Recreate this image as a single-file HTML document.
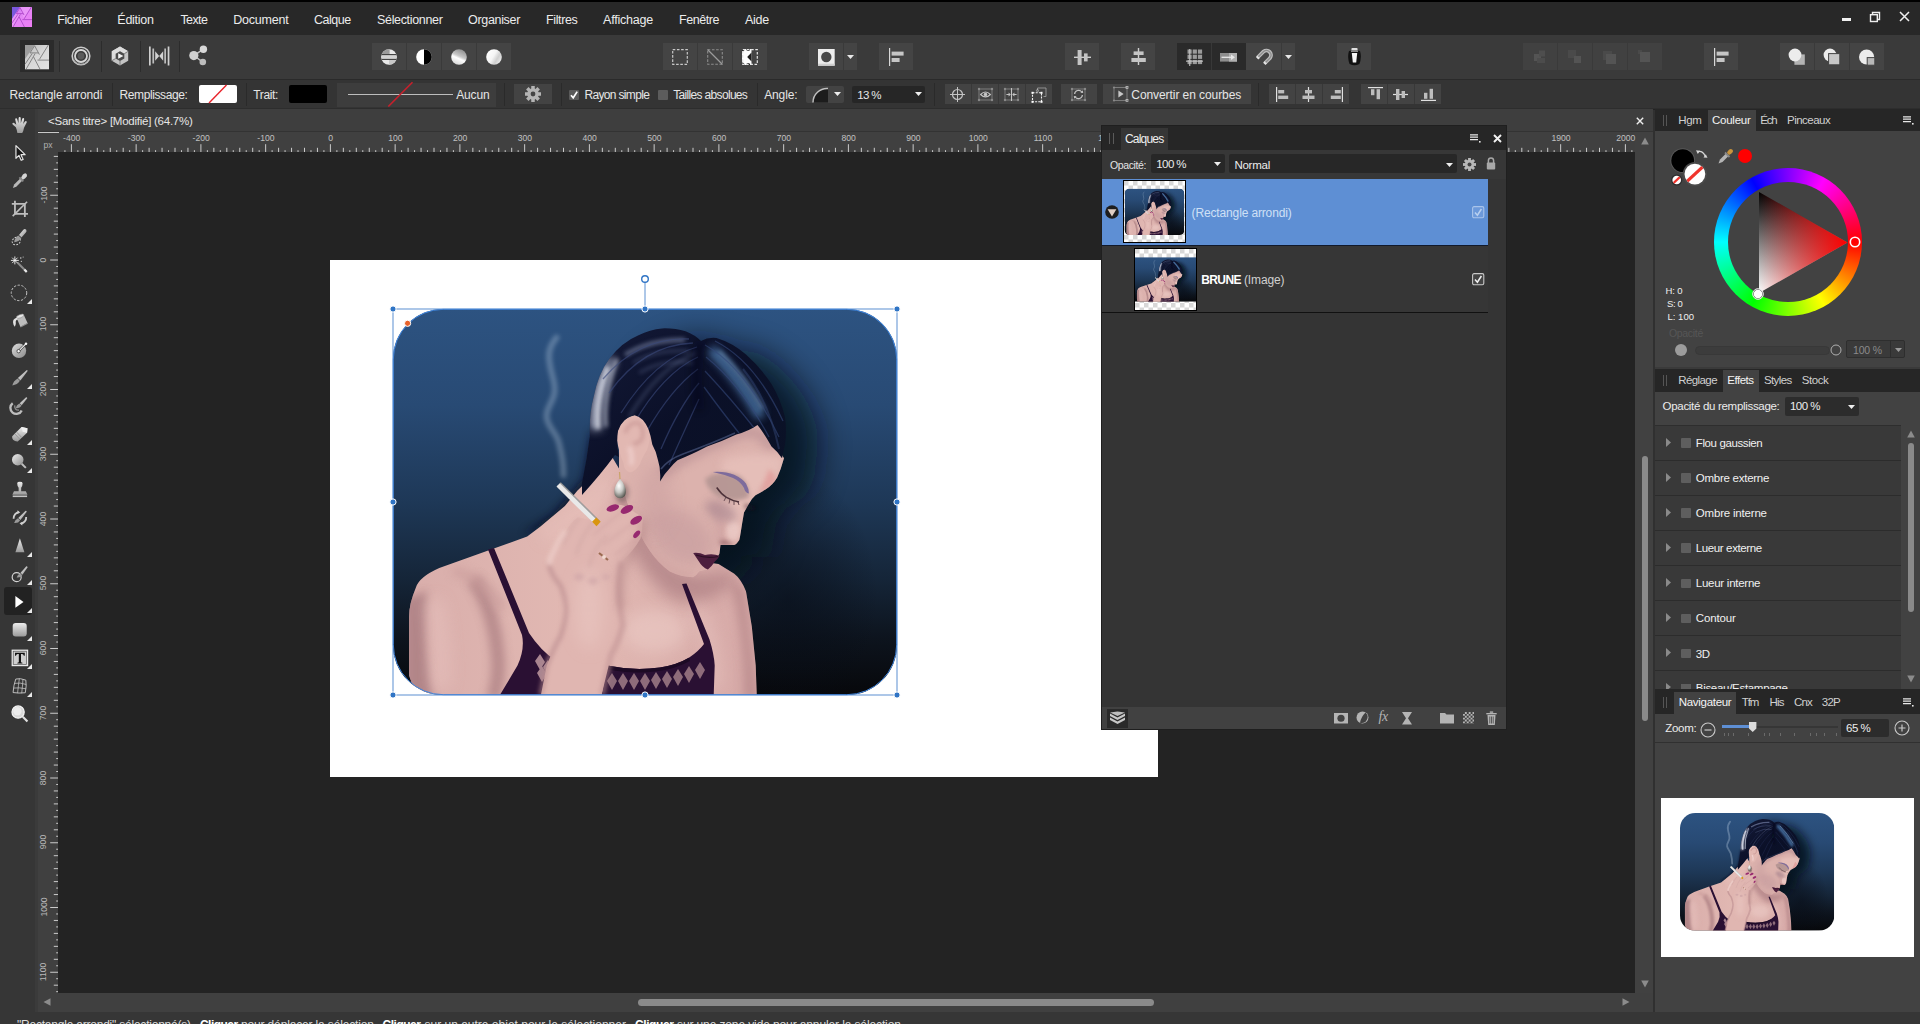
<!DOCTYPE html>
<html><head><meta charset="utf-8"><title>Affinity Photo</title>
<style>
html,body{margin:0;padding:0;background:#232323;}
body{width:1920px;height:1024px;overflow:hidden;position:relative;font-family:"Liberation Sans",sans-serif;}
.a{position:absolute;display:block;}
.t{position:absolute;white-space:pre;display:block;}
svg{overflow:visible}
</style></head><body>
<div class="a" style="left:0.00px;top:0.00px;width:1920.00px;height:2.00px;background:#000;"></div>
<div class="a" style="left:0.00px;top:2.00px;width:1920.00px;height:33.00px;background:#282828;"></div>
<div class="a" style="left:0.00px;top:35.00px;width:1920.00px;height:44.00px;background:#3a3a3a;"></div>
<div class="a" style="left:0.00px;top:79.00px;width:1920.00px;height:1.00px;background:#2a2a2a;"></div>
<div class="a" style="left:0.00px;top:80.00px;width:1920.00px;height:28.00px;background:#343434;"></div>
<div class="a" style="left:0.00px;top:108.00px;width:1920.00px;height:1.30px;background:#2d2d2d;"></div>
<div class="a" style="left:0.00px;top:109.30px;width:38.00px;height:902.70px;background:#363636;"></div>
<div class="a" style="left:35.00px;top:109.30px;width:3.00px;height:902.70px;background:#3b3b3b;"></div>
<div class="a" style="left:38.00px;top:109.30px;width:1615.00px;height:22.70px;background:#3e3e3e;"></div>
<div class="a" style="left:38.00px;top:131.00px;width:1615.00px;height:1.00px;background:#333;"></div>
<div class="a" style="left:38.00px;top:132.00px;width:1615.00px;height:20.00px;background:#404040;"></div>
<div class="a" style="left:38.00px;top:132.00px;width:20.00px;height:861.00px;background:#404040;"></div>
<div class="a" style="left:38.00px;top:132.00px;width:21.00px;height:1.00px;background:#c8c8c8;"></div>
<div class="a" style="left:58.00px;top:152.00px;width:1576.00px;height:841.00px;background:#232323;"></div>
<div class="a" style="left:1634.50px;top:132.00px;width:18.00px;height:861.00px;background:#414141;"></div>
<div class="a" style="left:38.00px;top:993.00px;width:1615.00px;height:19.00px;background:#404040;"></div>
<div class="a" style="left:1652.50px;top:110.00px;width:2.30px;height:902.00px;background:#303030;"></div>
<div class="a" style="left:1654.80px;top:110.00px;width:265.20px;height:902.00px;background:#424242;"></div>
<div class="a" style="left:0.00px;top:1012.00px;width:1920.00px;height:12.00px;background:#363636;"></div>
<svg class="a" style="left:12.00px;top:7.00px;" width="20" height="20" viewBox="0 0 20 20"><defs><linearGradient id="lg1" x1="0" y1="0" x2="1" y2="1"><stop offset="0" stop-color="#c77cf2"/><stop offset=".5" stop-color="#e585f6"/><stop offset="1" stop-color="#ee7cf4"/></linearGradient></defs>
<rect width="20" height="20" fill="url(#lg1)"/>
<path d="M0 0H8L0 12Z" fill="#7a58dc"/>
<path d="M8 0H19.4L12 12L8 .6L4.200 6.600H11.200L8.400 7.200L1 20H0V12Z" fill="#f0a4fa" opacity=".55"/>
<path d="M19.4 0.0L12.0 12.0M8.0 0.6L12.0 8.0M8.0 0.6L4.2 6.6M4.2 6.6L11.2 6.6M8.4 7.2L1.0 20.0M6.0 7.2L0.0 16.0M7.2 10.0L12.4 20.0M10.4 12.6L20.0 12.6" stroke="#b048cc" stroke-width=".9" fill="none"/></svg>
<span class="t" style="left:57.30px;top:11.97px;font-size:12.5px;line-height:16px;color:#ececec;letter-spacing:-0.444px;">Fichier</span>
<span class="t" style="left:117.30px;top:11.97px;font-size:12.5px;line-height:16px;color:#ececec;letter-spacing:-0.253px;">Édition</span>
<span class="t" style="left:180.40px;top:11.97px;font-size:12.5px;line-height:16px;color:#ececec;letter-spacing:-0.595px;">Texte</span>
<span class="t" style="left:233.30px;top:11.97px;font-size:12.5px;line-height:16px;color:#ececec;letter-spacing:-0.221px;">Document</span>
<span class="t" style="left:314.00px;top:11.97px;font-size:12.5px;line-height:16px;color:#ececec;letter-spacing:-0.502px;">Calque</span>
<span class="t" style="left:377.00px;top:11.97px;font-size:12.5px;line-height:16px;color:#ececec;letter-spacing:-0.332px;">Sélectionner</span>
<span class="t" style="left:468.00px;top:11.97px;font-size:12.5px;line-height:16px;color:#ececec;letter-spacing:-0.320px;">Organiser</span>
<span class="t" style="left:546.00px;top:11.97px;font-size:12.5px;line-height:16px;color:#ececec;letter-spacing:-0.361px;">Filtres</span>
<span class="t" style="left:603.00px;top:11.97px;font-size:12.5px;line-height:16px;color:#ececec;letter-spacing:-0.210px;">Affichage</span>
<span class="t" style="left:679.00px;top:11.97px;font-size:12.5px;line-height:16px;color:#ececec;letter-spacing:-0.440px;">Fenêtre</span>
<span class="t" style="left:745.00px;top:11.97px;font-size:12.5px;line-height:16px;color:#ececec;letter-spacing:-0.255px;">Aide</span>
<div class="a" style="left:1842.00px;top:18.00px;width:9.00px;height:3.00px;background:#f0f0f0;"></div>
<svg class="a" style="left:1869.00px;top:11.00px;" width="12" height="12" viewBox="0 0 12 12"><path d="M3.5 3.5V1.5H10.5V8.5H8.5" fill="none" stroke="#eee" stroke-width="1.4"/><rect x="1.5" y="3.7" width="6.8" height="6.8" fill="none" stroke="#eee" stroke-width="1.4"/></svg>
<svg class="a" style="left:1899.00px;top:11.00px;" width="11" height="11" viewBox="0 0 11 11"><path d="M1 1L10 10M10 1L1 10" stroke="#eee" stroke-width="1.5"/></svg>
<div class="a" style="left:20.00px;top:40.00px;width:34.00px;height:32.00px;background:#2b2b2b;"></div>
<svg class="a" style="left:25.00px;top:45.00px;" width="24" height="24.3" viewBox="0 0 24 24.3"><defs><linearGradient id="pg" x1="0" y1="0" x2="1" y2="1"><stop offset="0" stop-color="#b8b8b8"/><stop offset=".5" stop-color="#d8d8d8"/><stop offset="1" stop-color="#e2e2e2"/></linearGradient></defs>
<rect width="24" height="24.300" fill="url(#pg)"/>
<path d="M0 0H9.600L0 14Z" fill="#9c9c9c"/>
<path d="M23.3 0.0L14.4 14.4M9.6 0.7L14.4 9.6M9.6 0.7L5.0 7.9M5.0 7.9L13.4 7.9M10.1 8.6L1.2 24.0M7.2 8.6L0.0 19.2M8.6 12.0L14.9 24.0M12.5 15.1L24.0 15.1" stroke="#7c7c7c" stroke-width=".9" fill="none"/></svg>
<div class="a" style="left:58.80px;top:41.00px;width:1.00px;height:31.00px;background:#2c2c2c;"></div>
<div class="a" style="left:100.80px;top:41.00px;width:1.00px;height:31.00px;background:#2c2c2c;"></div>
<div class="a" style="left:140.00px;top:41.00px;width:1.00px;height:31.00px;background:#2c2c2c;"></div>
<div class="a" style="left:179.20px;top:41.00px;width:1.00px;height:31.00px;background:#2c2c2c;"></div>
<svg class="a" style="left:70.80px;top:45.70px;" width="20" height="20" viewBox="0 0 20 20"><circle cx="10" cy="10" r="8.8" fill="none" stroke="#c9c9c9" stroke-width="1.6"/>
<circle cx="10" cy="10" r="6" fill="none" stroke="#d6d6d6" stroke-width="1.8"/>
<path d="M2.6 13A8 8 0 0 0 17 14" fill="none" stroke="#999" stroke-width="1"/>
<circle cx="10" cy="10" r="3.4" fill="#5a5a5a"/></svg>
<svg class="a" style="left:110.00px;top:45.50px;" width="20" height="20" viewBox="0 0 20 20"><path d="M10 .6L18.2 5.3V14.7L10 19.4L1.8 14.7V5.3Z" fill="#c4c4c4"/>
<path d="M10 .6L18.2 5.3L14 7.6L10 5.2L5.6 7.8V12.6L1.8 14.7V5.3Z" fill="#dcdcdc"/>
<path d="M10 5.2L14.3 7.7V12.5L10 15L5.7 12.5V7.7Z" fill="#4a4a4a"/>
<path d="M8.2 7.2L13.4 10L8.2 12.8Z" fill="#f2f2f2"/>
<path d="M5.7 12.5L1.8 14.7M14.3 7.7L18.2 5.3M10 15V19.4" stroke="#6a6a6a" stroke-width=".8"/></svg>
<svg class="a" style="left:148.80px;top:45.50px;" width="20.4" height="20" viewBox="0 0 20.4 20"><rect x="0" y=".5" width="1.7" height="19" fill="#cfcfcf"/><rect x="3.4" y="2.5" width="1.7" height="15" fill="#bdbdbd"/>
<rect x="18.7" y=".5" width="1.7" height="19" fill="#cfcfcf"/><rect x="15.3" y="2.5" width="1.7" height="15" fill="#bdbdbd"/>
<path d="M6.2 5.2L10.2 10L6.2 14.8ZM14.2 5.2L10.2 10L14.2 14.8Z" fill="#d2d2d2"/></svg>
<svg class="a" style="left:188.00px;top:45.00px;" width="20" height="21" viewBox="0 0 20 21"><path d="M6 10.6L15.2 4.2M6 10.6L14.6 17" stroke="#c2c2c2" stroke-width="1.5"/>
<circle cx="5.8" cy="10.6" r="4.6" fill="#d0d0d0"/><circle cx="15.4" cy="4.2" r="3.7" fill="#d8d8d8"/><circle cx="14.8" cy="17" r="3.3" fill="#bcbcbc"/></svg>
<div class="a" style="left:372.20px;top:43.00px;width:139.00px;height:27.00px;background:#444444;"></div>
<div class="a" style="left:406.20px;top:43.00px;width:1.00px;height:27.00px;background:#3a3a3a;"></div>
<div class="a" style="left:441.00px;top:43.00px;width:1.00px;height:27.00px;background:#3a3a3a;"></div>
<div class="a" style="left:475.70px;top:43.00px;width:1.00px;height:27.00px;background:#3a3a3a;"></div>
<svg class="a" style="left:380.80px;top:48.80px;" width="16" height="16" viewBox="0 0 16 16"><defs><clipPath id="c1"><circle cx="8" cy="8" r="7.8"/></clipPath></defs>
<g clip-path="url(#c1)"><rect width="16" height="16" fill="#e9e9e9"/><rect width="8.6" height="5" fill="#9c9c9c"/><rect x="8" y="11" width="8" height="5" fill="#c8c8c8"/>
<rect y="5" width="16" height="1.4" fill="#444"/><rect y="9.6" width="16" height="1.4" fill="#444"/><rect y="6.4" width="16" height="3.2" fill="#d4d4d4"/></g></svg>
<svg class="a" style="left:415.80px;top:48.80px;" width="16" height="16" viewBox="0 0 16 16"><circle cx="8" cy="8" r="7.8" fill="#fff"/><path d="M8 .2A7.8 7.8 0 0 1 8 15.8Z" fill="#000"/></svg>
<svg class="a" style="left:450.80px;top:48.80px;" width="16" height="16" viewBox="0 0 16 16"><defs><linearGradient id="g3" x1=".75" y1="0" x2=".3" y2="1"><stop offset="0" stop-color="#8a8a8a"/><stop offset=".45" stop-color="#c8c8c8"/><stop offset=".6" stop-color="#fff"/><stop offset="1" stop-color="#d8d8d8"/></linearGradient></defs><circle cx="8" cy="8" r="7.8" fill="url(#g3)"/></svg>
<svg class="a" style="left:485.80px;top:48.80px;" width="16" height="16" viewBox="0 0 16 16"><defs><linearGradient id="g4" x1="0" y1=".2" x2="1" y2=".8"><stop offset="0" stop-color="#fff"/><stop offset=".45" stop-color="#f4f4f4"/><stop offset=".7" stop-color="#cfcfcf"/><stop offset="1" stop-color="#f0f0f0"/></linearGradient></defs><circle cx="8" cy="8" r="7.8" fill="url(#g4)"/></svg>
<div class="a" style="left:663.30px;top:43.00px;width:103.70px;height:27.00px;background:#444444;"></div>
<div class="a" style="left:697.00px;top:43.00px;width:1.00px;height:27.00px;background:#3a3a3a;"></div>
<div class="a" style="left:732.00px;top:43.00px;width:1.00px;height:27.00px;background:#3a3a3a;"></div>
<svg class="a" style="left:672.00px;top:49.00px;" width="16" height="16" viewBox="0 0 16 16"><rect x=".7" y=".7" width="14.6" height="14.6" fill="none" stroke="#c8c8c8" stroke-width="1.2" stroke-dasharray="2.6 1.6"/></svg>
<svg class="a" style="left:707.00px;top:49.00px;" width="16" height="16" viewBox="0 0 16 16"><rect x=".7" y=".7" width="14.6" height="14.6" fill="none" stroke="#8c8c8c" stroke-width="1.1" stroke-dasharray="2.6 1.6"/><path d="M.5 .5L15.5 15.5" stroke="#9a9a9a" stroke-width="1.3"/></svg>
<svg class="a" style="left:742.00px;top:49.00px;" width="16" height="16" viewBox="0 0 16 16"><rect x="0" y="0" width="9.5" height="16" fill="#fff"/><path d="M9.5 3.5L5.2 8L9.5 12.5Z" fill="#1e1e1e"/><path d="M0 2.5A2.5 2.5 0 0 0 2.5 0H0ZM0 13.5A2.5 2.5 0 0 1 2.5 16H0Z" fill="#222"/><path d="M4.2 0A2 2 0 0 0 8.2 0ZM4.2 16A2 2 0 0 1 8.2 16Z" fill="#222"/>
<rect x=".7" y=".7" width="14.6" height="14.6" fill="none" stroke="#e4e4e4" stroke-width="1.2" stroke-dasharray="2.6 1.6"/></svg>
<div class="a" style="left:808.70px;top:43.00px;width:48.00px;height:27.00px;background:#444444;"></div>
<div class="a" style="left:842.80px;top:43.00px;width:1.00px;height:27.00px;background:#3a3a3a;"></div>
<svg class="a" style="left:817.50px;top:48.70px;" width="16.7" height="16.7" viewBox="0 0 16.7 16.7"><rect width="16.7" height="16.7" fill="#ededed"/><rect y="14.7" width="16.7" height="2" fill="#cfcfcf"/><circle cx="8.3" cy="8" r="5.2" fill="#484848"/></svg>
<svg class="a" style="left:847.30px;top:55.00px;" width="7" height="4" viewBox="0 0 7 4"><path d="M0 0H7L3.5 4Z" fill="#e8e8e8"/></svg>
<div class="a" style="left:879.20px;top:43.00px;width:33.60px;height:27.00px;background:#444444;"></div>
<svg class="a" style="left:888.60px;top:47.50px;" width="16" height="18" viewBox="0 0 16 18"><rect x="0" y="0" width="1.2" height="18" fill="#d8d8d8"/><rect x="2.6" y="3.6" width="12" height="4" fill="#c6c6c6"/><rect x="2.6" y="10" width="8" height="4" fill="#c6c6c6"/></svg>
<div class="a" style="left:1065.00px;top:43.00px;width:34.00px;height:27.00px;background:#444444;"></div>
<svg class="a" style="left:1073.50px;top:48.50px;" width="17" height="17" viewBox="0 0 17 17"><rect x="0" y="7.6" width="17" height="1.4" fill="#cfcfcf"/><rect x="3.6" y="1" width="4" height="15" fill="#c4c4c4"/><rect x="10" y="4.4" width="3.6" height="8" fill="#c4c4c4"/></svg>
<div class="a" style="left:1120.80px;top:43.00px;width:34.20px;height:27.00px;background:#444444;"></div>
<svg class="a" style="left:1129.50px;top:48.00px;" width="17" height="17" viewBox="0 0 17 17"><rect x="7.8" y="0" width="1.4" height="17" fill="#cfcfcf"/><rect x="3.6" y="3.4" width="10" height="3.6" fill="#c4c4c4"/><rect x="1.4" y="10" width="14.4" height="4" fill="#c4c4c4"/></svg>
<div class="a" style="left:1176.70px;top:43.00px;width:69.30px;height:27.00px;background:#2a2a2a;"></div>
<div class="a" style="left:1211.00px;top:43.00px;width:1.00px;height:27.00px;background:#383838;"></div>
<div class="a" style="left:1246.00px;top:43.00px;width:49.30px;height:27.00px;background:#444444;"></div>
<div class="a" style="left:1280.80px;top:43.00px;width:1.00px;height:27.00px;background:#3a3a3a;"></div>
<svg class="a" style="left:1186.00px;top:49.00px;" width="17" height="17" viewBox="0 0 17 17"><rect x="1.5" y="0.5" width="4.2" height="4.2" fill="#9a9a9a"/><rect x="1.5" y="5.7" width="4.2" height="4.2" fill="#9a9a9a"/><rect x="1.5" y="10.9" width="4.2" height="4.2" fill="#9a9a9a"/><rect x="6.7" y="0.5" width="4.2" height="4.2" fill="#9a9a9a"/><rect x="6.7" y="5.7" width="4.2" height="4.2" fill="#9a9a9a"/><rect x="6.7" y="10.9" width="4.2" height="4.2" fill="#9a9a9a"/><rect x="11.9" y="0.5" width="4.2" height="4.2" fill="#9a9a9a"/><rect x="11.9" y="5.7" width="4.2" height="4.2" fill="#9a9a9a"/><rect x="11.9" y="10.9" width="4.2" height="4.2" fill="#9a9a9a"/><rect x="3.2" y="0" width="1.1" height="17" fill="#c0c0c0"/><rect x="0" y="11.6" width="17" height="1.1" fill="#c0c0c0"/></svg>
<svg class="a" style="left:1220.00px;top:52.50px;" width="17" height="9" viewBox="0 0 17 9"><rect x="0" y="0" width="17" height="8.6" fill="#8e8e8e"/><rect x="9" y="0" width="8" height="8.6" fill="#b0b0b0"/><path d="M1.5 4.3H12" stroke="#e8e8e8" stroke-width="1.3"/><path d="M11 1.6L15 4.3L11 7Z" fill="#e8e8e8"/></svg>
<svg class="a" style="left:1255.00px;top:48.00px;" width="18" height="18" viewBox="0 0 18 18"><path d="M2.6 9.5L8.6 3.5A4.6 4.6 0 0 1 15 10L10 15" fill="none" stroke="#bdbdbd" stroke-width="3.8"/>
<path d="M2.6 9.5L8.6 3.5A4.6 4.6 0 0 1 15 10L10 15" fill="none" stroke="#8c8c8c" stroke-width="1.2"/>
<path d="M1.6 8.4L4 10.8M8.8 14L11.2 16.2" stroke="#e6e6e6" stroke-width="2"/></svg>
<svg class="a" style="left:1285.30px;top:55.00px;" width="7" height="4" viewBox="0 0 7 4"><path d="M0 0H7L3.5 4Z" fill="#e8e8e8"/></svg>
<div class="a" style="left:1336.70px;top:43.00px;width:34.10px;height:27.00px;background:#444444;"></div>
<svg class="a" style="left:1346.50px;top:47.00px;" width="15" height="19" viewBox="0 0 15 19"><path d="M2 4Q0 10 2.6 17Q7.5 19.6 12.4 17Q15 10 13 4Q7.5 2.4 2 4Z" fill="#111"/>
<path d="M4.8 6H10.2L9.2 15.4H5.8Z" fill="#f4f4f4"/><rect x="4.4" y="1" width="6.2" height="2.6" rx="1" fill="#e0e0e0"/><rect x="4" y="3.4" width="7" height="1.6" fill="#8a8a8a"/></svg>
<div class="a" style="left:1523.00px;top:43.00px;width:139.00px;height:27.00px;background:#414141;"></div>
<div class="a" style="left:1556.80px;top:43.00px;width:1.00px;height:27.00px;background:#3a3a3a;"></div>
<div class="a" style="left:1592.00px;top:43.00px;width:1.00px;height:27.00px;background:#3a3a3a;"></div>
<div class="a" style="left:1627.00px;top:43.00px;width:1.00px;height:27.00px;background:#3a3a3a;"></div>
<svg class="a" style="left:1532.00px;top:48.00px;" width="17" height="17" viewBox="0 0 17 17"><rect x="2" y="6" width="7" height="7" fill="#545454"/><rect x="7" y="2.5" width="6" height="6" fill="#4e4e4e"/><rect x="5" y="10" width="8" height="5" fill="#4c4c4c"/></svg>
<svg class="a" style="left:1566.00px;top:48.00px;" width="17" height="17" viewBox="0 0 17 17"><rect x="2" y="2" width="8" height="8" fill="#4a4a4a"/><rect x="8" y="8" width="7" height="7" fill="#545454"/></svg>
<svg class="a" style="left:1601.00px;top:48.00px;" width="17" height="17" viewBox="0 0 17 17"><rect x="2" y="3" width="9" height="9" fill="#4a4a4a"/><rect x="5" y="6" width="10" height="10" fill="#545454"/></svg>
<svg class="a" style="left:1636.00px;top:48.00px;" width="17" height="17" viewBox="0 0 17 17"><rect x="2" y="2" width="4" height="4" fill="#4a4a4a"/><rect x="4" y="4" width="10" height="10" fill="#545454"/></svg>
<div class="a" style="left:1704.00px;top:43.00px;width:33.80px;height:27.00px;background:#444444;"></div>
<svg class="a" style="left:1713.60px;top:47.50px;" width="16" height="18" viewBox="0 0 16 18"><rect x="0" y="0" width="1.2" height="18" fill="#d8d8d8"/><rect x="2.6" y="3.6" width="12" height="4" fill="#c6c6c6"/><rect x="2.6" y="10" width="8" height="4" fill="#c6c6c6"/></svg>
<div class="a" style="left:1780.00px;top:43.00px;width:104.00px;height:27.00px;background:#444444;"></div>
<div class="a" style="left:1813.90px;top:43.00px;width:1.00px;height:27.00px;background:#3a3a3a;"></div>
<div class="a" style="left:1848.90px;top:43.00px;width:1.00px;height:27.00px;background:#3a3a3a;"></div>
<svg class="a" style="left:1787.00px;top:47.00px;" width="20" height="20" viewBox="0 0 20 20"><rect x="7.4" y="7.4" width="10.4" height="10.4" fill="#b4b4b4"/><circle cx="8" cy="8" r="6.4" fill="#ececec"/></svg>
<svg class="a" style="left:1822.00px;top:47.00px;" width="20" height="20" viewBox="0 0 20 20"><circle cx="8" cy="8" r="6.4" fill="#ececec"/><rect x="6.6" y="6.6" width="11.2" height="11.2" fill="#c8c8c8" stroke="#444" stroke-width="1"/></svg>
<svg class="a" style="left:1857.00px;top:47.00px;" width="20" height="20" viewBox="0 0 20 20"><circle cx="9.6" cy="10" r="7.6" fill="#ececec"/><rect x="10.2" y="10.6" width="7.6" height="7.6" fill="#b8b8b8" stroke="#444" stroke-width="1"/></svg>
<span class="t" style="left:9.50px;top:87.34px;font-size:12px;line-height:16px;color:#e6e6e6;letter-spacing:-0.119px;">Rectangle arrondi</span>
<div class="a" style="left:111.50px;top:83.00px;width:1.00px;height:23.00px;background:#2a2a2a;"></div>
<span class="t" style="left:119.50px;top:87.34px;font-size:12px;line-height:16px;color:#e6e6e6;letter-spacing:-0.391px;">Remplissage:</span>
<svg class="a" style="left:199.00px;top:85.00px;" width="38" height="18" viewBox="0 0 38 18"><rect width="38" height="18" rx="2" fill="#fff"/><path d="M10 18L27.5 0" stroke="#e8232a" stroke-width="1.4"/></svg>
<div class="a" style="left:246.20px;top:83.00px;width:1.00px;height:23.00px;background:#2a2a2a;"></div>
<span class="t" style="left:253.30px;top:87.34px;font-size:12px;line-height:16px;color:#e6e6e6;letter-spacing:-0.365px;">Trait:</span>
<div class="a" style="left:288.80px;top:85.00px;width:38.40px;height:18.00px;background:#000;border-radius:2px;"></div>
<div class="a" style="left:336.70px;top:83.00px;width:159.00px;height:23.50px;background:#3d3d3d;"></div>
<div class="a" style="left:348.00px;top:93.80px;width:105.00px;height:1.00px;background:#bdbdbd;"></div>
<svg class="a" style="left:386.00px;top:81.00px;" width="30" height="27" viewBox="0 0 30 27"><path d="M26.5 1.2L2.3 25.5" stroke="#c8202c" stroke-width="1.6"/></svg>
<span class="t" style="left:456.20px;top:87.34px;font-size:12px;line-height:16px;color:#e6e6e6;letter-spacing:-0.145px;">Aucun</span>
<div class="a" style="left:503.70px;top:83.00px;width:1.00px;height:23.00px;background:#2a2a2a;"></div>
<div class="a" style="left:514.20px;top:84.00px;width:37.50px;height:20.00px;background:#434343;"></div>
<svg class="a" style="left:524.80px;top:86.20px" width="16" height="16" viewBox="-8 -8 16 16"><rect x="-1.76" y="-8.00" width="3.52" height="4.00" transform="rotate(0)" fill="#b4b4b4"/><rect x="-1.76" y="-8.00" width="3.52" height="4.00" transform="rotate(45)" fill="#b4b4b4"/><rect x="-1.76" y="-8.00" width="3.52" height="4.00" transform="rotate(90)" fill="#b4b4b4"/><rect x="-1.76" y="-8.00" width="3.52" height="4.00" transform="rotate(135)" fill="#b4b4b4"/><rect x="-1.76" y="-8.00" width="3.52" height="4.00" transform="rotate(180)" fill="#b4b4b4"/><rect x="-1.76" y="-8.00" width="3.52" height="4.00" transform="rotate(225)" fill="#b4b4b4"/><rect x="-1.76" y="-8.00" width="3.52" height="4.00" transform="rotate(270)" fill="#b4b4b4"/><rect x="-1.76" y="-8.00" width="3.52" height="4.00" transform="rotate(315)" fill="#b4b4b4"/><circle r="5.76" fill="#b4b4b4"/><circle r="2.40" fill="#434343"/></svg>
<div class="a" style="left:560.50px;top:83.00px;width:1.00px;height:23.00px;background:#2a2a2a;"></div>
<svg class="a" style="left:569.20px;top:90.20px;" width="10" height="10" viewBox="0 0 10 10"><rect width="10" height="10" rx="1" fill="#5a5a5a"/><path d="M2 5.2L4.2 7.8L8.2 1.6" stroke="#fff" stroke-width="1.7" fill="none"/></svg>
<span class="t" style="left:584.50px;top:87.34px;font-size:12px;line-height:16px;color:#e6e6e6;letter-spacing:-0.666px;">Rayon simple</span>
<svg class="a" style="left:658.00px;top:90.20px;" width="10" height="10" viewBox="0 0 10 10"><rect width="10" height="10" rx="1" fill="#5c5c5c"/></svg>
<span class="t" style="left:673.30px;top:87.34px;font-size:12px;line-height:16px;color:#e6e6e6;letter-spacing:-0.676px;">Tailles absolues</span>
<div class="a" style="left:756.70px;top:83.00px;width:1.00px;height:23.00px;background:#2a2a2a;"></div>
<span class="t" style="left:764.20px;top:87.34px;font-size:12px;line-height:16px;color:#e6e6e6;letter-spacing:-0.121px;">Angle:</span>
<div class="a" style="left:806.20px;top:85.70px;width:38.00px;height:17.50px;background:#434343;border-radius:2px;"></div>
<svg class="a" style="left:811.50px;top:87.00px;" width="17" height="15.5" viewBox="0 0 17 15.5"><path d="M1 15.5A14 14 0 0 1 16 1.5V15.5Z" fill="#1c1c1c"/><path d="M1 15.5A14 14 0 0 1 16 1.5" fill="none" stroke="#c0c0c0" stroke-width="1.5"/></svg>
<svg class="a" style="left:833.50px;top:92.00px;" width="7" height="4" viewBox="0 0 7 4"><path d="M0 0H7L3.5 4Z" fill="#eee"/></svg>
<div class="a" style="left:851.70px;top:85.70px;width:73.80px;height:17.50px;background:#262626;border-radius:2px;"></div>
<span class="t" style="left:857.20px;top:87.32px;font-size:11.5px;line-height:16px;color:#e6e6e6;letter-spacing:-0.653px;">13 %</span>
<svg class="a" style="left:915.30px;top:92.00px;" width="7" height="4" viewBox="0 0 7 4"><path d="M0 0H7L3.5 4Z" fill="#eee"/></svg>
<div class="a" style="left:933.70px;top:83.00px;width:1.00px;height:23.00px;background:#2a2a2a;"></div>
<div class="a" style="left:945.00px;top:84.00px;width:106.70px;height:20.00px;background:#434343;"></div>
<div class="a" style="left:971.20px;top:84.00px;width:1.00px;height:20.00px;background:#383838;"></div>
<div class="a" style="left:997.80px;top:84.00px;width:1.00px;height:20.00px;background:#383838;"></div>
<div class="a" style="left:1024.50px;top:84.00px;width:1.00px;height:20.00px;background:#383838;"></div>
<svg class="a" style="left:950.30px;top:86.70px;" width="15" height="15" viewBox="0 0 15 15"><circle cx="7.5" cy="7.5" r="5" fill="none" stroke="#c4c4c4" stroke-width="1.2"/><path d="M7.5 0V15M0 7.5H15" stroke="#c4c4c4" stroke-width="1"/></svg>
<svg class="a" style="left:977.50px;top:87.50px;" width="15" height="13" viewBox="0 0 15 13"><rect x="1" y="1" width="13" height="11" fill="none" stroke="#8a8a8a" stroke-width=".8"/><circle cx="1" cy="1" r="1.2" fill="#8a8a8a"/><circle cx="14" cy="1" r="1.2" fill="#8a8a8a"/><circle cx="1" cy="12" r="1.2" fill="#8a8a8a"/><circle cx="14" cy="12" r="1.2" fill="#8a8a8a"/><path d="M2.6 6.5Q7.5 1.6 12.4 6.5Q7.5 11.4 2.6 6.5Z" fill="none" stroke="#c4c4c4" stroke-width="1.1"/><circle cx="7.5" cy="6.5" r="1.8" fill="#c4c4c4"/></svg>
<svg class="a" style="left:1004.20px;top:87.50px;" width="15" height="13" viewBox="0 0 15 13"><rect x="1" y="1" width="13" height="11" fill="none" stroke="#8a8a8a" stroke-width=".8"/><circle cx="1" cy="1" r="1.2" fill="#8a8a8a"/><circle cx="14" cy="1" r="1.2" fill="#8a8a8a"/><circle cx="1" cy="12" r="1.2" fill="#8a8a8a"/><circle cx="14" cy="12" r="1.2" fill="#8a8a8a"/><path d="M7.5 0V13" stroke="#c4c4c4" stroke-width="1.1"/><path d="M2.4 6.5H5.6M12.6 6.5H9.4" stroke="#c4c4c4" stroke-width="1.1"/><path d="M4.6 4.4L6.8 6.5L4.6 8.6ZM10.4 4.4L8.2 6.5L10.4 8.6Z" fill="#c4c4c4"/></svg>
<svg class="a" style="left:1031.00px;top:86.50px;" width="16" height="16" viewBox="0 0 16 16"><path d="M6.5 3.5V1H15V9.5H12.5" fill="none" stroke="#9a9a9a" stroke-width=".9"/><circle cx="6.5" cy="3.6" r="1.1" fill="none" stroke="#bbb" stroke-width=".7"/><rect x="1.5" y="5.8" width="9" height="9" fill="none" stroke="#f0f0f0" stroke-width="1.1" stroke-dasharray="2 1.2"/><rect x="0.5" y="4.8" width="2" height="2" fill="#fff"/><rect x="9.5" y="4.8" width="2" height="2" fill="#fff"/><rect x="0.5" y="13.8" width="2" height="2" fill="#fff"/><rect x="9.5" y="13.8" width="2" height="2" fill="#fff"/></svg>
<div class="a" style="left:1060.80px;top:84.00px;width:36.00px;height:20.00px;background:#434343;"></div>
<svg class="a" style="left:1071.30px;top:87.50px;" width="15" height="13" viewBox="0 0 15 13"><rect x="1" y="1" width="13" height="11" fill="none" stroke="#8a8a8a" stroke-width=".8"/><circle cx="1" cy="1" r="1.2" fill="#8a8a8a"/><circle cx="14" cy="1" r="1.2" fill="#8a8a8a"/><circle cx="1" cy="12" r="1.2" fill="#8a8a8a"/><circle cx="14" cy="12" r="1.2" fill="#8a8a8a"/><path d="M3.6 6A4 4 0 0 1 10.8 4M11.4 7A4 4 0 0 1 4.2 9" fill="none" stroke="#c4c4c4" stroke-width="1.2"/><path d="M9.4 4.8L12.2 5L11.8 2.2ZM5.6 8.2L2.8 8L3.2 10.8Z" fill="#c4c4c4"/></svg>
<div class="a" style="left:1103.30px;top:84.00px;width:147.50px;height:20.00px;background:#434343;"></div>
<svg class="a" style="left:1113.00px;top:86.00px;" width="16" height="17" viewBox="0 0 16 17"><rect x="1" y="1.5" width="13" height="13" fill="none" stroke="#8a8a8a" stroke-width=".8"/><circle cx="1" cy="1.5" r="1.1" fill="#8a8a8a"/><circle cx="1" cy="14.5" r="1.1" fill="#8a8a8a"/><rect x="13" y=".5" width="2" height="2" fill="none" stroke="#ccc" stroke-width=".7"/><rect x="13" y="13.5" width="2" height="2" fill="none" stroke="#ccc" stroke-width=".7"/><path d="M5.4 4.6L10.6 8L5.4 11.4Z" fill="#c8c8c8"/></svg>
<span class="t" style="left:1131.30px;top:87.34px;font-size:12px;line-height:16px;color:#e6e6e6;letter-spacing:-0.074px;">Convertir en courbes</span>
<div class="a" style="left:1257.80px;top:83.00px;width:1.00px;height:23.00px;background:#2a2a2a;"></div>
<div class="a" style="left:1269.20px;top:84.00px;width:80.00px;height:20.00px;background:#434343;"></div>
<div class="a" style="left:1294.80px;top:84.00px;width:1.00px;height:20.00px;background:#383838;"></div>
<div class="a" style="left:1322.00px;top:84.00px;width:1.00px;height:20.00px;background:#383838;"></div>
<svg class="a" style="left:1276.00px;top:86.50px;" width="13" height="15" viewBox="0 0 13 15"><rect x="0" y="0" width="1.2" height="15" fill="#e0e0e0"/><rect x="2.2" y="3" width="6" height="3.4" fill="#bdbdbd"/><rect x="2.2" y="8.6" width="10" height="3.4" fill="#bdbdbd"/></svg>
<svg class="a" style="left:1302.00px;top:86.50px;" width="13" height="15" viewBox="0 0 13 15"><rect x="5.9" y="0" width="1.2" height="15" fill="#e0e0e0"/><rect x="3" y="3" width="7" height="3.4" fill="#bdbdbd"/><rect x=".5" y="8.6" width="12" height="3.4" fill="#bdbdbd"/></svg>
<svg class="a" style="left:1329.60px;top:86.50px;" width="13" height="15" viewBox="0 0 13 15"><rect x="11.8" y="0" width="1.2" height="15" fill="#e0e0e0"/><rect x="4.8" y="3" width="6" height="3.4" fill="#bdbdbd"/><rect x=".8" y="8.6" width="10" height="3.4" fill="#bdbdbd"/></svg>
<div class="a" style="left:1360.80px;top:84.00px;width:80.50px;height:20.00px;background:#434343;"></div>
<div class="a" style="left:1387.30px;top:84.00px;width:1.00px;height:20.00px;background:#383838;"></div>
<div class="a" style="left:1413.70px;top:84.00px;width:1.00px;height:20.00px;background:#383838;"></div>
<svg class="a" style="left:1367.50px;top:87.00px;" width="15" height="13" viewBox="0 0 15 13"><rect x="0" y="0" width="15" height="1.2" fill="#e0e0e0"/><rect x="3" y="2.2" width="3.4" height="6" fill="#bdbdbd"/><rect x="8.6" y="2.2" width="3.4" height="10" fill="#bdbdbd"/></svg>
<svg class="a" style="left:1393.30px;top:87.50px;" width="15" height="13" viewBox="0 0 15 13"><rect x="0" y="5.9" width="15" height="1.2" fill="#e0e0e0"/><rect x="3" y="1" width="3.4" height="11" fill="#bdbdbd"/><rect x="8.6" y="3" width="3.4" height="7" fill="#bdbdbd"/></svg>
<svg class="a" style="left:1420.80px;top:87.50px;" width="15" height="13" viewBox="0 0 15 13"><rect x="0" y="11.8" width="15" height="1.2" fill="#e0e0e0"/><rect x="3" y="4.8" width="3.4" height="6" fill="#bdbdbd"/><rect x="8.6" y=".8" width="3.4" height="10" fill="#bdbdbd"/></svg>
<svg width="0" height="0" style="position:absolute"><defs><linearGradient id="tg" x1="0" y1="0" x2="1" y2="1"><stop offset="0" stop-color="#f0f0f0"/><stop offset="1" stop-color="#8c8c8c"/></linearGradient><linearGradient id="tg2" x1="0" y1="0" x2="0" y2="1"><stop offset="0" stop-color="#ececec"/><stop offset="1" stop-color="#9a9a9a"/></linearGradient></defs></svg>
<svg class="a" style="left:9.60px;top:115.90px;" width="19.8" height="19.8" viewBox="0 0 22 22"><path d="M6.5 12.5L3.2 9.6Q2 8.6 3 7.8Q4 7.2 5 8L7 9.6L5.8 4Q5.6 2.8 6.6 2.6Q7.6 2.4 8 3.6L9.4 8L9.6 2.2Q9.7 1 10.8 1Q11.9 1 11.9 2.2L12 8L13.6 3Q14 1.9 15 2.2Q16 2.6 15.7 3.8L14.6 9L16.6 6.2Q17.4 5.2 18.3 5.8Q19 6.4 18.4 7.4L15.6 13Q14.8 17 13.6 19H8.2Q7.6 15 6.5 12.5Z" fill="url(#tg2)"/></svg>
<svg class="a" style="left:9.60px;top:142.90px;" width="19.8" height="19.8" viewBox="0 0 22 22"><path d="M6.6 3V17L10 13.8L12.4 19.2L14.6 18.2L12.2 13H16.8Z" fill="#1a1a1a" stroke="#e8e8e8" stroke-width="1.3" stroke-linejoin="round"/></svg>
<svg class="a" style="left:9.60px;top:170.90px;" width="19.8" height="19.8" viewBox="0 0 22 22"><path d="M3.2 19L4.6 15L11.4 8.2L13.8 10.6L7 17.4Z" fill="#b8b8b8"/><path d="M10.4 7.2L14.8 11.6" stroke="#8a8a8a" stroke-width="2"/><path d="M12.4 7.6Q14 3 17 2.6Q19.6 3.4 18.6 6Q17.4 8.2 14.4 9.6Z" fill="#d4d4d4"/></svg>
<svg class="a" style="left:9.60px;top:198.90px;" width="19.8" height="19.8" viewBox="0 0 22 22"><path d="M5.5 2V16.5H20M2 5.5H16.5V20" fill="none" stroke="#bdbdbd" stroke-width="2"/><path d="M3 19L19 3" stroke="#bdbdbd" stroke-width="1.8"/></svg>
<svg class="a" style="left:9.60px;top:226.90px;" width="19.8" height="19.8" viewBox="0 0 22 22"><ellipse cx="7" cy="15.6" rx="4.8" ry="4" fill="none" stroke="#d8d8d8" stroke-width="1" stroke-dasharray="2 1.4" transform="rotate(-30 7 15.6)"/><path d="M4.6 17Q5 12 9.2 9.4L12.6 12.6Q10 16.6 4.6 17Z" fill="#9c9c9c"/><path d="M10 9L14.6 3.2Q16.4 1.6 18 3Q19 4.6 17.6 6L12.8 11.8Z" fill="url(#tg)"/></svg>
<svg class="a" style="left:9.60px;top:254.90px;" width="19.8" height="19.8" viewBox="0 0 22 22"><path d="M8.2 8.4L18.4 18.6" stroke="#8c8c8c" stroke-width="2.2"/><path d="M16 16.2L18.6 18.8" stroke="#e8e8e8" stroke-width="2.4"/><path d="M5.4 1.6V10.4M1 6H9.8M2.4 3L8.4 9M8.4 3L2.4 9" stroke="#f2f2f2" stroke-width="1"/><circle cx="12" cy="3.4" r=".8" fill="#ddd"/><circle cx="14.6" cy="2.2" r=".6" fill="#ddd"/><circle cx="12.6" cy="7" r=".7" fill="#ddd"/></svg>
<svg class="a" style="left:9.60px;top:282.90px;" width="19.8" height="19.8" viewBox="0 0 22 22"><circle cx="10" cy="11" r="8.6" fill="none" stroke="#c4c4c4" stroke-width="1.1" stroke-dasharray="2.6 1.7"/></svg>
<svg class="a" style="left:26.50px;top:299.00px;" width="5" height="5" viewBox="0 0 5 5"><path d="M5 0V5H0Z" fill="#e8e8e8"/></svg>
<svg class="a" style="left:9.60px;top:311.90px;" width="19.8" height="19.8" viewBox="0 0 22 22"><path d="M7.2 6.2L15.4 3.2L19.6 12.4L11.6 16.8Z" fill="#bdbdbd"/><ellipse cx="11.3" cy="4.7" rx="4.4" ry="1.8" transform="rotate(-20 11.3 4.7)" fill="#e6e6e6" stroke="#888" stroke-width=".6"/><path d="M7.4 6.4Q3 7.6 3.4 11.6Q3.6 14.6 5.4 16.4Q7 13 6.4 10.4Q6.6 8.6 9 8Z" fill="#e2e2e2"/><path d="M11.6 16.8L19.6 12.4" stroke="#8a8a8a" stroke-width="1.2"/></svg>
<svg class="a" style="left:9.60px;top:339.90px;" width="19.8" height="19.8" viewBox="0 0 22 22"><defs><linearGradient id="gd" x1="0" y1="0" x2="1" y2="1"><stop offset="0" stop-color="#ddd"/><stop offset="1" stop-color="#8a8a8a"/></linearGradient></defs><circle cx="10" cy="12" r="8" fill="url(#gd)"/><path d="M9.6 12.4L17.6 4.4" stroke="#3c3c3c" stroke-width="2.6"/><path d="M9.6 12.4L17.6 4.4" stroke="#f4f4f4" stroke-width="1.3"/><circle cx="9.6" cy="12.4" r="1.9" fill="#f4f4f4" stroke="#3c3c3c" stroke-width=".9"/><circle cx="17.8" cy="4.2" r="1.4" fill="#f4f4f4"/></svg>
<svg class="a" style="left:9.60px;top:367.90px;" width="19.8" height="19.8" viewBox="0 0 22 22"><path d="M2.6 19.4Q3.6 14.4 8.4 11.6L11 14.2Q8.4 18.6 2.6 19.4Z" fill="#9c9c9c"/><path d="M8.8 11L18.4 2.4Q19.4 2 19.6 3.2L11.6 13.8Z" fill="url(#tg)"/></svg>
<svg class="a" style="left:26.50px;top:384.00px;" width="5" height="5" viewBox="0 0 5 5"><path d="M5 0V5H0Z" fill="#e8e8e8"/></svg>
<svg class="a" style="left:9.60px;top:395.90px;" width="19.8" height="19.8" viewBox="0 0 22 22"><path d="M3 8A6.6 6.6 0 1 0 13 16" fill="none" stroke="#bdbdbd" stroke-width="2.6"/><path d="M5.4 10.4A4 4 0 0 0 10 15.6" fill="none" stroke="#8a8a8a" stroke-width="1.6"/><path d="M6.4 13.4Q7.2 10 10.4 8.4L12.8 10.8Q11 14 6.4 13.4Z" fill="#9a9a9a"/><path d="M10.8 8L17.6 1.6Q19 1.2 19.2 2.6L13 10.4Z" fill="url(#tg)"/></svg>
<svg class="a" style="left:9.60px;top:423.90px;" width="19.8" height="19.8" viewBox="0 0 22 22"><path d="M2.4 13.6L12.8 3.4L19.4 4.6L19 9.6L8.6 19.4Q5.6 19.6 3.4 17.6Q2 15.6 2.4 13.6Z" fill="url(#tg2)"/><path d="M12.8 3.4L19.4 4.6L19 9.6L14 8.6Z" fill="#f0f0f0"/><path d="M5.4 11L10.8 16.8M7.4 9L12.8 14.8" stroke="#8a8a8a" stroke-width=".8"/></svg>
<svg class="a" style="left:26.50px;top:440.00px;" width="5" height="5" viewBox="0 0 5 5"><path d="M5 0V5H0Z" fill="#e8e8e8"/></svg>
<svg class="a" style="left:9.60px;top:451.90px;" width="19.8" height="19.8" viewBox="0 0 22 22"><circle cx="8.6" cy="8.6" r="6.4" fill="url(#tg)"/><path d="M13 13L17.6 17.6" stroke="#bdbdbd" stroke-width="2.2"/></svg>
<svg class="a" style="left:26.50px;top:468.00px;" width="5" height="5" viewBox="0 0 5 5"><path d="M5 0V5H0Z" fill="#e8e8e8"/></svg>
<svg class="a" style="left:9.60px;top:479.90px;" width="19.8" height="19.8" viewBox="0 0 22 22"><path d="M8 3.6Q8 2 11 2Q14 2 14 3.6Q14 6.6 12.4 8.6V12.4H17.6L19.4 16.4H2.6L4.4 12.4H9.6V8.6Q8 6.6 8 3.6Z" fill="url(#tg2)"/><rect x="3" y="17.2" width="16" height="1.8" fill="#c4c4c4"/></svg>
<svg class="a" style="left:9.60px;top:507.90px;" width="19.8" height="19.8" viewBox="0 0 22 22"><path d="M4 12A7 7 0 0 1 10 4.6M18 10A7 7 0 0 1 12 17.4" fill="none" stroke="#cfcfcf" stroke-width="2"/><path d="M8.4 2.6L11.4 5L7.8 6.6ZM13.6 19.4L10.6 17L14.2 15.4Z" fill="#cfcfcf"/><path d="M4.6 16.6Q5.4 13 8.8 11.4L11.2 13.8Q9.4 17 4.6 16.6Z" fill="#9a9a9a"/><path d="M9.2 11L17 3.2Q18.4 2.8 18.6 4.2L11.6 13.4Z" fill="url(#tg)"/></svg>
<svg class="a" style="left:9.60px;top:535.90px;" width="19.8" height="19.8" viewBox="0 0 22 22"><path d="M11 2.6L16 18H6Z" fill="url(#tg2)"/></svg>
<svg class="a" style="left:26.50px;top:552.00px;" width="5" height="5" viewBox="0 0 5 5"><path d="M5 0V5H0Z" fill="#e8e8e8"/></svg>
<svg class="a" style="left:9.60px;top:563.90px;" width="19.8" height="19.8" viewBox="0 0 22 22"><circle cx="7.4" cy="14.6" r="5" fill="none" stroke="#d4d4d4" stroke-width="1.3"/><path d="M7.4 15Q8.2 11.8 11.4 10.2L13.6 12.4Q12 15.6 7.4 15Z" fill="#9a9a9a"/><path d="M11.8 9.8L18.2 2.6Q19.4 2.4 19.4 3.8L13.8 12Z" fill="url(#tg)"/></svg>
<svg class="a" style="left:26.50px;top:580.00px;" width="5" height="5" viewBox="0 0 5 5"><path d="M5 0V5H0Z" fill="#e8e8e8"/></svg>
<div class="a" style="left:4.00px;top:587.00px;width:28.00px;height:28.00px;background:#222;border-radius:3px;"></div>
<svg class="a" style="left:9.60px;top:591.90px;" width="19.8" height="19.8" viewBox="0 0 22 22"><path d="M6 4.400L15 11L6 17.600Z" fill="#fff"/></svg>
<svg class="a" style="left:26.50px;top:608.00px;" width="5" height="5" viewBox="0 0 5 5"><path d="M5 0V5H0Z" fill="#e8e8e8"/></svg>
<svg class="a" style="left:9.60px;top:619.90px;" width="19.8" height="19.8" viewBox="0 0 22 22"><rect x="3" y="3.4" width="15.6" height="15" rx="3.4" fill="url(#tg2)"/></svg>
<svg class="a" style="left:26.50px;top:636.00px;" width="5" height="5" viewBox="0 0 5 5"><path d="M5 0V5H0Z" fill="#e8e8e8"/></svg>
<svg class="a" style="left:9.60px;top:647.90px;" width="19.8" height="19.8" viewBox="0 0 22 22"><rect x="2.4" y="2.4" width="17.2" height="17.2" fill="#cfcfcf" stroke="#f2f2f2" stroke-width="1.2"/><rect x="3.6" y="3.6" width="14.8" height="14.8" fill="none" stroke="#555" stroke-width=".7"/><path d="M5.6 5.4H16.4V8.6H15.4Q15.2 6.6 13.4 6.6H12.2V15.4Q12.2 16.4 13.8 16.5V17.2H8.2V16.5Q9.8 16.4 9.8 15.4V6.6H8.6Q6.8 6.6 6.6 8.6H5.6Z" fill="#111"/></svg>
<svg class="a" style="left:26.50px;top:664.00px;" width="5" height="5" viewBox="0 0 5 5"><path d="M5 0V5H0Z" fill="#e8e8e8"/></svg>
<svg class="a" style="left:9.60px;top:675.90px;" width="19.8" height="19.8" viewBox="0 0 22 22"><path d="M6.4 3.4Q11 2 17.6 4.6Q18.6 11 17 18.6Q10 19.4 3.4 18.4Q4 10 6.4 3.4Z" fill="none" stroke="#bdbdbd" stroke-width="1.1"/><path d="M5.2 8.2Q11 7 18 9.4M4.2 13.4Q10 12.6 17.8 14.2M10.4 2.8Q9.4 10 8.4 19M14.4 3.6Q14 11 13 19.2" fill="none" stroke="#bdbdbd" stroke-width=".9"/></svg>
<svg class="a" style="left:26.50px;top:692.00px;" width="5" height="5" viewBox="0 0 5 5"><path d="M5 0V5H0Z" fill="#e8e8e8"/></svg>
<svg class="a" style="left:9.60px;top:703.90px;" width="19.8" height="19.8" viewBox="0 0 22 22"><circle cx="9" cy="9" r="6.8" fill="#d8d8d8" stroke="#f4f4f4" stroke-width="1.4"/><circle cx="8.2" cy="8" r="4.6" fill="#ececec"/><path d="M14.2 14.2L19.4 19.4" stroke="#e0e0e0" stroke-width="2.4"/></svg>
<span class="t" style="left:48.00px;top:113.02px;font-size:11.5px;line-height:16px;color:#e6e6e6;letter-spacing:-0.254px;">&lt;Sans titre&gt; [Modifié] (64.7%)</span>
<svg class="a" style="left:1636.00px;top:116.50px;" width="8" height="8" viewBox="0 0 8 8"><path d="M.8 .8L7.2 7.2M7.2 .8L.8 7.2" stroke="#eee" stroke-width="1.4"/></svg>
<svg class="a" style="left:38px;top:132px" width="1596" height="20" viewBox="0 0 1596 20"><path d="M26.93 20V18.2M33.40 20V12.2M39.88 20V18.2M46.35 20V15.8M52.82 20V18.2M59.30 20V15.8M65.77 20V18.2M72.25 20V15.8M78.72 20V18.2M85.20 20V15.8M91.67 20V18.2M98.15 20V12.2M104.62 20V18.2M111.10 20V15.8M117.57 20V18.2M124.05 20V15.8M130.52 20V18.2M137.00 20V15.8M143.47 20V18.2M149.95 20V15.8M156.42 20V18.2M162.90 20V12.2M169.38 20V18.2M175.85 20V15.8M182.32 20V18.2M188.80 20V15.8M195.27 20V18.2M201.75 20V15.8M208.22 20V18.2M214.70 20V15.8M221.17 20V18.2M227.65 20V12.2M234.12 20V18.2M240.60 20V15.8M247.07 20V18.2M253.55 20V15.8M260.02 20V18.2M266.50 20V15.8M272.97 20V18.2M279.45 20V15.8M285.92 20V18.2M292.40 20V12.2M298.88 20V18.2M305.35 20V15.8M311.82 20V18.2M318.30 20V15.8M324.77 20V18.2M331.25 20V15.8M337.72 20V18.2M344.20 20V15.8M350.67 20V18.2M357.15 20V12.2M363.62 20V18.2M370.10 20V15.8M376.57 20V18.2M383.05 20V15.8M389.52 20V18.2M396.00 20V15.8M402.47 20V18.2M408.95 20V15.8M415.42 20V18.2M421.90 20V12.2M428.38 20V18.2M434.85 20V15.8M441.32 20V18.2M447.80 20V15.8M454.27 20V18.2M460.75 20V15.8M467.22 20V18.2M473.70 20V15.8M480.17 20V18.2M486.65 20V12.2M493.12 20V18.2M499.60 20V15.8M506.07 20V18.2M512.55 20V15.8M519.02 20V18.2M525.50 20V15.8M531.97 20V18.2M538.45 20V15.8M544.92 20V18.2M551.40 20V12.2M557.88 20V18.2M564.35 20V15.8M570.83 20V18.2M577.30 20V15.8M583.77 20V18.2M590.25 20V15.8M596.72 20V18.2M603.20 20V15.8M609.67 20V18.2M616.15 20V12.2M622.62 20V18.2M629.10 20V15.8M635.57 20V18.2M642.05 20V15.8M648.52 20V18.2M655.00 20V15.8M661.47 20V18.2M667.95 20V15.8M674.42 20V18.2M680.90 20V12.2M687.38 20V18.2M693.85 20V15.8M700.32 20V18.2M706.80 20V15.8M713.27 20V18.2M719.75 20V15.8M726.22 20V18.2M732.70 20V15.8M739.17 20V18.2M745.65 20V12.2M752.12 20V18.2M758.60 20V15.8M765.07 20V18.2M771.55 20V15.8M778.02 20V18.2M784.50 20V15.8M790.97 20V18.2M797.45 20V15.8M803.92 20V18.2M810.40 20V12.2M816.88 20V18.2M823.35 20V15.8M829.82 20V18.2M836.30 20V15.8M842.77 20V18.2M849.25 20V15.8M855.72 20V18.2M862.20 20V15.8M868.67 20V18.2M875.15 20V12.2M881.62 20V18.2M888.10 20V15.8M894.57 20V18.2M901.05 20V15.8M907.52 20V18.2M914.00 20V15.8M920.47 20V18.2M926.95 20V15.8M933.42 20V18.2M939.90 20V12.2M946.37 20V18.2M952.85 20V15.8M959.32 20V18.2M965.80 20V15.8M972.27 20V18.2M978.75 20V15.8M985.22 20V18.2M991.70 20V15.8M998.17 20V18.2M1004.65 20V12.2M1011.12 20V18.2M1017.60 20V15.8M1024.07 20V18.2M1030.55 20V15.8M1037.03 20V18.2M1043.50 20V15.8M1049.97 20V18.2M1056.45 20V15.8M1062.92 20V18.2M1069.40 20V12.2M1075.88 20V18.2M1082.35 20V15.8M1088.82 20V18.2M1095.30 20V15.8M1101.78 20V18.2M1108.25 20V15.8M1114.72 20V18.2M1121.20 20V15.8M1127.67 20V18.2M1134.15 20V12.2M1140.62 20V18.2M1147.10 20V15.8M1153.57 20V18.2M1160.05 20V15.8M1166.53 20V18.2M1173.00 20V15.8M1179.47 20V18.2M1185.95 20V15.8M1192.42 20V18.2M1198.90 20V12.2M1205.38 20V18.2M1211.85 20V15.8M1218.32 20V18.2M1224.80 20V15.8M1231.28 20V18.2M1237.75 20V15.8M1244.22 20V18.2M1250.70 20V15.8M1257.17 20V18.2M1263.65 20V12.2M1270.12 20V18.2M1276.60 20V15.8M1283.07 20V18.2M1289.55 20V15.8M1296.03 20V18.2M1302.50 20V15.8M1308.97 20V18.2M1315.45 20V15.8M1321.92 20V18.2M1328.40 20V12.2M1334.88 20V18.2M1341.35 20V15.8M1347.82 20V18.2M1354.30 20V15.8M1360.78 20V18.2M1367.25 20V15.8M1373.72 20V18.2M1380.20 20V15.8M1386.67 20V18.2M1393.15 20V12.2M1399.62 20V18.2M1406.10 20V15.8M1412.57 20V18.2M1419.05 20V15.8M1425.53 20V18.2M1432.00 20V15.8M1438.47 20V18.2M1444.95 20V15.8M1451.42 20V18.2M1457.90 20V12.2M1464.38 20V18.2M1470.85 20V15.8M1477.32 20V18.2M1483.80 20V15.8M1490.28 20V18.2M1496.75 20V15.8M1503.22 20V18.2M1509.70 20V15.8M1516.17 20V18.2M1522.65 20V12.2M1529.12 20V18.2M1535.60 20V15.8M1542.07 20V18.2M1548.55 20V15.8M1555.03 20V18.2M1561.50 20V15.8M1567.97 20V18.2M1574.45 20V15.8M1580.92 20V18.2M1587.40 20V12.2M1593.88 20V18.2" stroke="#e4e4e4" stroke-width=".85" fill="none"/></svg>
<span class="t" style="left:63.09px;top:130.02px;font-size:8.6px;line-height:16px;color:#c0c0c0;">-400</span>
<span class="t" style="left:127.84px;top:130.02px;font-size:8.6px;line-height:16px;color:#c0c0c0;">-300</span>
<span class="t" style="left:192.59px;top:130.02px;font-size:8.6px;line-height:16px;color:#c0c0c0;">-200</span>
<span class="t" style="left:257.34px;top:130.02px;font-size:8.6px;line-height:16px;color:#c0c0c0;">-100</span>
<span class="t" style="left:328.31px;top:130.02px;font-size:8.6px;line-height:16px;color:#c0c0c0;">0</span>
<span class="t" style="left:388.28px;top:130.02px;font-size:8.6px;line-height:16px;color:#c0c0c0;">100</span>
<span class="t" style="left:453.03px;top:130.02px;font-size:8.6px;line-height:16px;color:#c0c0c0;">200</span>
<span class="t" style="left:517.78px;top:130.02px;font-size:8.6px;line-height:16px;color:#c0c0c0;">300</span>
<span class="t" style="left:582.53px;top:130.02px;font-size:8.6px;line-height:16px;color:#c0c0c0;">400</span>
<span class="t" style="left:647.28px;top:130.02px;font-size:8.6px;line-height:16px;color:#c0c0c0;">500</span>
<span class="t" style="left:712.03px;top:130.02px;font-size:8.6px;line-height:16px;color:#c0c0c0;">600</span>
<span class="t" style="left:776.78px;top:130.02px;font-size:8.6px;line-height:16px;color:#c0c0c0;">700</span>
<span class="t" style="left:841.53px;top:130.02px;font-size:8.6px;line-height:16px;color:#c0c0c0;">800</span>
<span class="t" style="left:906.28px;top:130.02px;font-size:8.6px;line-height:16px;color:#c0c0c0;">900</span>
<span class="t" style="left:968.63px;top:130.02px;font-size:8.6px;line-height:16px;color:#c0c0c0;">1000</span>
<span class="t" style="left:1033.70px;top:130.02px;font-size:8.6px;line-height:16px;color:#c0c0c0;">1100</span>
<span class="t" style="left:1098.13px;top:130.02px;font-size:8.6px;line-height:16px;color:#c0c0c0;">1200</span>
<span class="t" style="left:1162.88px;top:130.02px;font-size:8.6px;line-height:16px;color:#c0c0c0;">1300</span>
<span class="t" style="left:1227.63px;top:130.02px;font-size:8.6px;line-height:16px;color:#c0c0c0;">1400</span>
<span class="t" style="left:1292.38px;top:130.02px;font-size:8.6px;line-height:16px;color:#c0c0c0;">1500</span>
<span class="t" style="left:1357.13px;top:130.02px;font-size:8.6px;line-height:16px;color:#c0c0c0;">1600</span>
<span class="t" style="left:1421.88px;top:130.02px;font-size:8.6px;line-height:16px;color:#c0c0c0;">1700</span>
<span class="t" style="left:1486.63px;top:130.02px;font-size:8.6px;line-height:16px;color:#c0c0c0;">1800</span>
<span class="t" style="left:1551.38px;top:130.02px;font-size:8.6px;line-height:16px;color:#c0c0c0;">1900</span>
<span class="t" style="left:1616.13px;top:130.02px;font-size:8.6px;line-height:16px;color:#c0c0c0;">2000</span>
<span class="t" style="left:43.50px;top:137.02px;font-size:8.6px;line-height:16px;color:#b0b0b0;">px</span>
<svg class="a" style="left:38px;top:132px" width="20" height="861" viewBox="0 0 20 861"><path d="M20 24.40H15.8M20 30.88H18.2M20 37.35H15.8M20 43.82H18.2M20 50.30H15.8M20 56.78H18.2M20 63.25H12.2M20 69.72H18.2M20 76.20H15.8M20 82.68H18.2M20 89.15H15.8M20 95.62H18.2M20 102.10H15.8M20 108.57H18.2M20 115.05H15.8M20 121.53H18.2M20 128.00H12.2M20 134.48H18.2M20 140.95H15.8M20 147.43H18.2M20 153.90H15.8M20 160.38H18.2M20 166.85H15.8M20 173.32H18.2M20 179.80H15.8M20 186.27H18.2M20 192.75H12.2M20 199.23H18.2M20 205.70H15.8M20 212.18H18.2M20 218.65H15.8M20 225.12H18.2M20 231.60H15.8M20 238.07H18.2M20 244.55H15.8M20 251.02H18.2M20 257.50H12.2M20 263.98H18.2M20 270.45H15.8M20 276.92H18.2M20 283.40H15.8M20 289.88H18.2M20 296.35H15.8M20 302.82H18.2M20 309.30H15.8M20 315.77H18.2M20 322.25H12.2M20 328.73H18.2M20 335.20H15.8M20 341.67H18.2M20 348.15H15.8M20 354.62H18.2M20 361.10H15.8M20 367.57H18.2M20 374.05H15.8M20 380.52H18.2M20 387.00H12.2M20 393.47H18.2M20 399.95H15.8M20 406.42H18.2M20 412.90H15.8M20 419.38H18.2M20 425.85H15.8M20 432.33H18.2M20 438.80H15.8M20 445.27H18.2M20 451.75H12.2M20 458.22H18.2M20 464.70H15.8M20 471.17H18.2M20 477.65H15.8M20 484.12H18.2M20 490.60H15.8M20 497.08H18.2M20 503.55H15.8M20 510.02H18.2M20 516.50H12.2M20 522.97H18.2M20 529.45H15.8M20 535.92H18.2M20 542.40H15.8M20 548.88H18.2M20 555.35H15.8M20 561.83H18.2M20 568.30H15.8M20 574.77H18.2M20 581.25H12.2M20 587.72H18.2M20 594.20H15.8M20 600.67H18.2M20 607.15H15.8M20 613.62H18.2M20 620.10H15.8M20 626.58H18.2M20 633.05H15.8M20 639.52H18.2M20 646.00H12.2M20 652.48H18.2M20 658.95H15.8M20 665.42H18.2M20 671.90H15.8M20 678.38H18.2M20 684.85H15.8M20 691.32H18.2M20 697.80H15.8M20 704.27H18.2M20 710.75H12.2M20 717.23H18.2M20 723.70H15.8M20 730.17H18.2M20 736.65H15.8M20 743.12H18.2M20 749.60H15.8M20 756.07H18.2M20 762.55H15.8M20 769.02H18.2M20 775.50H12.2M20 781.97H18.2M20 788.45H15.8M20 794.92H18.2M20 801.40H15.8M20 807.88H18.2M20 814.35H15.8M20 820.82H18.2M20 827.30H15.8M20 833.77H18.2M20 840.25H12.2M20 846.72H18.2M20 853.20H15.8M20 859.67H18.2" stroke="#e4e4e4" stroke-width=".85" fill="none"/></svg>
<span class="t" style="left:34.99px;top:186.95px;width:17.21px;font-size:8.6px;line-height:16px;color:#b8b8b8;transform:rotate(-90deg);transform-origin:50% 50%;">-100</span>
<span class="t" style="left:41.21px;top:251.70px;width:4.78px;font-size:8.6px;line-height:16px;color:#b8b8b8;transform:rotate(-90deg);transform-origin:50% 50%;">0</span>
<span class="t" style="left:36.43px;top:316.45px;width:14.35px;font-size:8.6px;line-height:16px;color:#b8b8b8;transform:rotate(-90deg);transform-origin:50% 50%;">100</span>
<span class="t" style="left:36.43px;top:381.20px;width:14.35px;font-size:8.6px;line-height:16px;color:#b8b8b8;transform:rotate(-90deg);transform-origin:50% 50%;">200</span>
<span class="t" style="left:36.43px;top:445.95px;width:14.35px;font-size:8.6px;line-height:16px;color:#b8b8b8;transform:rotate(-90deg);transform-origin:50% 50%;">300</span>
<span class="t" style="left:36.43px;top:510.70px;width:14.35px;font-size:8.6px;line-height:16px;color:#b8b8b8;transform:rotate(-90deg);transform-origin:50% 50%;">400</span>
<span class="t" style="left:36.43px;top:575.45px;width:14.35px;font-size:8.6px;line-height:16px;color:#b8b8b8;transform:rotate(-90deg);transform-origin:50% 50%;">500</span>
<span class="t" style="left:36.43px;top:640.20px;width:14.35px;font-size:8.6px;line-height:16px;color:#b8b8b8;transform:rotate(-90deg);transform-origin:50% 50%;">600</span>
<span class="t" style="left:36.43px;top:704.95px;width:14.35px;font-size:8.6px;line-height:16px;color:#b8b8b8;transform:rotate(-90deg);transform-origin:50% 50%;">700</span>
<span class="t" style="left:36.43px;top:769.70px;width:14.35px;font-size:8.6px;line-height:16px;color:#b8b8b8;transform:rotate(-90deg);transform-origin:50% 50%;">800</span>
<span class="t" style="left:36.43px;top:834.45px;width:14.35px;font-size:8.6px;line-height:16px;color:#b8b8b8;transform:rotate(-90deg);transform-origin:50% 50%;">900</span>
<span class="t" style="left:34.03px;top:899.20px;width:19.13px;font-size:8.6px;line-height:16px;color:#b8b8b8;transform:rotate(-90deg);transform-origin:50% 50%;">1000</span>
<span class="t" style="left:34.35px;top:963.95px;width:18.49px;font-size:8.6px;line-height:16px;color:#b8b8b8;transform:rotate(-90deg);transform-origin:50% 50%;">1100</span>
<div class="a" style="left:330.00px;top:260.00px;width:828.00px;height:517.00px;background:#fff;"></div>
<svg width="0" height="0" style="position:absolute"><defs><symbol id="art" viewBox="0 0 504 386" preserveAspectRatio="none" overflow="hidden"><defs>
<linearGradient id="abg" x1="0" y1="0" x2="0" y2="1">
<stop offset="0" stop-color="#2d5381"/><stop offset=".25" stop-color="#284a74"/><stop offset=".5" stop-color="#1e3857"/><stop offset=".7" stop-color="#152538"/><stop offset=".85" stop-color="#0d141e"/><stop offset="1" stop-color="#07080b"/></linearGradient>
<linearGradient id="askin" x1="0" y1="0" x2="1" y2="0"><stop offset="0" stop-color="#d9aeab"/><stop offset=".5" stop-color="#e2b9b3"/><stop offset="1" stop-color="#d6a9a7"/></linearGradient>
<linearGradient id="ahair" x1="0" y1="0" x2="1" y2="1"><stop offset="0" stop-color="#141a38"/><stop offset=".5" stop-color="#0b1028"/><stop offset="1" stop-color="#0a1226"/></linearGradient>
<linearGradient id="acig" x1="0" y1="0" x2="1" y2="1"><stop offset="0" stop-color="#9a9a9a"/><stop offset=".4" stop-color="#f4f4f4"/><stop offset="1" stop-color="#bdbdbd"/></linearGradient>
<radialGradient id="apearl" cx=".4" cy=".35" r=".7"><stop offset="0" stop-color="#fff"/><stop offset=".5" stop-color="#c8c8c4"/><stop offset="1" stop-color="#55564f"/></radialGradient>
<filter id="b2" filterUnits="userSpaceOnUse" x="-80" y="-80" width="664" height="546"><feGaussianBlur stdDeviation="2"/></filter>
<filter id="b4" filterUnits="userSpaceOnUse" x="-80" y="-80" width="664" height="546"><feGaussianBlur stdDeviation="4"/></filter>
<filter id="b8" filterUnits="userSpaceOnUse" x="-80" y="-80" width="664" height="546"><feGaussianBlur stdDeviation="8"/></filter>
<filter id="b16" filterUnits="userSpaceOnUse" x="-80" y="-80" width="664" height="546"><feGaussianBlur stdDeviation="16"/></filter>
<clipPath id="abody"><path d="M217.500 145.200L202.200 164.600L184.500 181.400L171.900 197L147.500 217.600L134.200 227.600L95.200 241.400L46.300 259Q26 268 22.900 278.500Q16 295 16.100 307.800V366.400L22.900 386H363.700L362.700 356.600L358.800 317.600L353 282.400Q348 270 341.250 264.800L325.500 255.100L290 250L250 200Z"/></clipPath>
<clipPath id="ahairc"><path id="hairp" d="M189 174Q194 150 196.800 127.600Q196 105 200.500 88.600Q205 65 216.500 49.600Q229 33 245.500 26.200Q257 20.500 269 19.400Q282 19 292.500 22.300Q302 26 308 32Q315 28 323.500 29Q340 34 353 45.600Q368 59 378.500 75Q388 91 392 108.300Q394 122 392 135.600L389 149.300Q385 143 378.500 137.600Q371 124 364.500 116Q356 122 343.300 125.600Q328 133 314 137.600Q298 146 284.500 151.200Q280 155 277 159Q271 165 267 172.600Q268 160 265 151.200Q263 142 259.300 135.600Q258 127 255.400 120Q250 108 241.500 106.300Q230 108 225 122Q223 135 226 148L222 146Q208 165 189 186Z"/></clipPath>
<path id="facep" d="M391 149.200Q388 160 384.200 168.600Q380 176 372.500 180.600Q367 184 362.500 186.300Q358 190 355.500 195.600L351 203.600Q349 215 347.100 227.300Q347 231 344.500 233.600Q343 236 341.250 236.100H327.500L326.500 244.600L325.500 246.600L313.900 260.600L306.100 262.600Q304 266 300.200 268.300Q288 268 276.800 262.600Q265 254 257.300 242.600Q235 210 226 160L226 120L250 100L300 95L364 105Z"/>
<clipPath id="afacec"><use href="#facep"/></clipPath>
<radialGradient id="ashd"><stop offset="0" stop-color="#070c16" stop-opacity=".55"/><stop offset=".5" stop-color="#070c16" stop-opacity=".3"/><stop offset="1" stop-color="#070c16" stop-opacity="0"/></radialGradient>
</defs>
<rect width="504" height="386" fill="url(#abg)"/>
<!-- head shadow -->
<g transform="translate(32,12)" filter="url(#b16)" opacity=".78"><use href="#hairp" fill="#060c18"/><use href="#facep" fill="#060c18"/></g>
<ellipse cx="395" cy="290" rx="90" ry="130" fill="url(#ashd)"/>
<!-- hair shadow along neck -->
<path d="M198 120L190 170L160 205L130 225L170 215L215 160Z" fill="#0a1024" opacity=".75" filter="url(#b4)"/>
<!-- smoke -->
<path d="M163.500 28.600C156 38 155 45 156.700 54.200C158 66 163 74 161.500 83.500C160 94 152 100 153.750 108.900C155 118 163 124 165.500 132.300C168 142 171 152 170.400 166" fill="none" stroke="#cfe0f0" stroke-width="6" opacity=".3" filter="url(#b2)" stroke-linecap="round"/>
<!-- body -->
<path d="M217.500 145.200L202.200 164.600L184.500 181.400L171.900 197L147.500 217.600L134.200 227.600L95.200 241.400L46.300 259Q26 268 22.900 278.500Q16 295 16.100 307.800V366.400L22.900 386H363.700L362.700 356.600L358.800 317.600L353 282.400Q348 270 341.250 264.800L325.500 255.100L290 250L250 200Z" fill="url(#askin)"/>
<g clip-path="url(#abody)">
<!-- left edge shadow of shoulder -->
<path d="M12 290V390H40Q30 340 34 282Z" fill="#a87c80" opacity=".8" filter="url(#b4)"/>
<!-- arm crease -->
<path d="M80 270Q100 300 104 340Q108 365 100 390" fill="none" stroke="#ad8083" stroke-width="14" opacity=".75" filter="url(#b4)"/>
<path d="M60 262Q90 268 110 300" fill="none" stroke="#c99c9b" stroke-width="10" opacity=".6" filter="url(#b4)"/>
<!-- highlight upper arm -->
<path d="M40 290Q50 330 48 380" fill="none" stroke="#ecc8c4" stroke-width="18" opacity=".45" filter="url(#b8)"/>
<!-- neck shadow below jaw -->
<path d="M236 170Q250 225 286 258Q305 272 330 262L345 268Q320 300 280 290Q240 262 222 200Z" fill="#b38588" opacity=".85" filter="url(#b8)"/>
<!-- right shoulder edge shading -->
<path d="M352 280L366 390H350Q352 330 336 270Z" fill="#b98a8c" opacity=".75" filter="url(#b4)"/>
<path d="M300 300Q320 320 322 380" fill="none" stroke="#eccbc7" stroke-width="16" opacity=".4" filter="url(#b8)"/>
<!-- chest highlight -->
<ellipse cx="262" cy="322" rx="32" ry="22" fill="#efd0cb" opacity=".5" filter="url(#b8)"/>
<path d="M150 225Q190 210 215 175" fill="none" stroke="#ebc6c1" stroke-width="14" opacity=".5" filter="url(#b8)"/>
</g>
<!-- garment -->
<g fill="#2a1033">
<path d="M95 240.500L101 239L136 324Q148 342 162 351L150 386H106.900L124.500 356.600Q132 340 129 326Z"/>
<path d="M214.300 356.600Q240 362 267 358.600Q284 356 296.300 348.600Q306 342 311 335.100L289 275L293.500 274.600L316.500 330.600Q321 345 321.700 356.600L320.700 386H208.500Z"/>
</g>
<path d="M214 372L219 364L224 372L219 381ZM225 372L230 364L235 372L230 381ZM236 372L241 364L246 372L241 381ZM247 372L252 364L257 372L252 381ZM258 371L263 363L268 371L263 380ZM269 370L274 362L279 370L274 379ZM280 368L285 360L290 368L285 377ZM291 365L296 357L301 365L296 374ZM302 361L307 353L312 361L307 370Z" fill="#8e6c7a"/>
<path d="M142 352L147 345L152 353L147 361ZM150 358L155 351L160 359L155 367ZM144 364L149 357L154 365L149 373Z" fill="#a98590"/>
<path d="M214.300 356.600Q240 362 267 358.600Q284 356 296.300 348.600L297 352Q280 361 262 362.500Q238 365 214 360.500Z" fill="#1c0a24"/>
<!-- head skin -->
<use href="#facep" fill="#dcb2ad"/>
<g clip-path="url(#afacec)">
<!-- face shading -->
<path d="M268 166Q290 146 343 126Q366 116 380 140" fill="none" stroke="#b48a90" stroke-width="12" opacity=".55" filter="url(#b4)"/>
<ellipse cx="288" cy="228" rx="34" ry="24" fill="#c0959a" opacity=".5" filter="url(#b8)" transform="rotate(35 288 228)"/>
<ellipse cx="262" cy="190" rx="16" ry="34" fill="#c79c9e" opacity=".45" filter="url(#b8)"/>
<path d="M330 150Q370 140 392 150L384 170Q375 180 362 186L352 203L347 228Q335 215 332 190Q325 170 330 150Z" fill="#ebc6c0" opacity=".6" filter="url(#b4)"/>
<path d="M376 160Q384 166 382 172Q376 180 366 184Q372 172 376 160Z" fill="#e08e8e" opacity=".55" filter="url(#b2)"/>
<path d="M300 268Q280 268 262 250Q246 228 240 200" fill="none" stroke="#c99c9c" stroke-width="9" opacity=".55" filter="url(#b4)"/>
<path d="M319 196Q330 212 327 236" fill="none" stroke="#c79a9c" stroke-width="7" opacity=".6" filter="url(#b4)"/>
<ellipse cx="340" cy="222" rx="7" ry="10" fill="#eecfca" opacity=".7" filter="url(#b2)"/>
<path d="M327.500 236.100H341Q334 231 327 231Z" fill="#8a5a60" opacity=".7" filter="url(#b2)"/>
</g>
<!-- eye -->
<path d="M312 170Q328 158 348 168Q357 177 356 188Q340 196 324 187Q314 180 312 170Z" fill="#b39492" opacity=".9" filter="url(#b2)"/>
<path d="M319.800 162.900Q332 162 341.250 165.800Q350 170 353 174.600Q356 180 355.900 184.400Q352 184 351 179Q347 172 340 169Q330 165 319.800 162.900Z" fill="#7d6b9c"/>
<path d="M323.700 178.500Q328 185 333.500 188.300Q340 192 346 193" fill="none" stroke="#4b3038" stroke-width="1.500"/>
<path d="M333 188L331 192M337 190L336 194.500M341 192L341 196M345 193L346 196" stroke="#4b3038" stroke-width=".8"/>
<path d="M352 196Q356 200 362 199" fill="none" stroke="#20141c" stroke-width="2" filter="url(#b2)" opacity=".8"/>
<ellipse cx="328" cy="202" rx="17" ry="9" fill="#a98690" opacity=".6" filter="url(#b4)" transform="rotate(25 328 202)"/>
<!-- lips -->
<path d="M300.200 243.900Q306 243 312 245.900Q320 244 326.600 246.850Q325 250 321.700 252.700Q319 257 314.900 260.600Q309 258 306.100 252.700Q303 248 300.200 243.900Z" fill="#4d1f3e"/>
<path d="M303 246Q314 250 325 247.500" fill="none" stroke="#2d1024" stroke-width="1.200"/>
<!-- ear -->
<path d="M241.500 106Q253 107 256 120Q258 131 254 141Q249 149 247 155Q243 162 237 163.500Q231 162 230.500 154Q225 141 223.500 128Q225 111 241.500 106Z" fill="#e2b8b2"/>
<path d="M232 124Q236 112 246 114Q252 120 249 130Q244 136 240 134" fill="none" stroke="#c08c8c" stroke-width="3" opacity=".7" filter="url(#b2)"/>
<path d="M236 138Q240 146 238 156" fill="none" stroke="#f2d4d2" stroke-width="4" opacity=".8" filter="url(#b2)"/>
<!-- earring -->
<path d="M226.500 163L227 170" stroke="#c9a46a" stroke-width="1.200"/>
<ellipse cx="228.800" cy="183.500" rx="7" ry="10" fill="#3a3034" opacity=".35" filter="url(#b2)"/>
<path d="M227.100 170Q232.800 176 232.900 183Q232.500 189 227.100 189.200Q221.600 189 221.300 183Q221.400 176 227.100 170Z" fill="url(#apearl)"/>
<!-- hair -->
<use href="#hairp" fill="url(#ahair)"/>
<g clip-path="url(#ahairc)">
<path d="M218 48Q200 88 203 122" fill="none" stroke="#aeb6cc" stroke-width="14" opacity=".6" filter="url(#b4)"/>
<path d="M215 58Q202 92 205 120" fill="none" stroke="#eef0f8" stroke-width="5" opacity=".75" filter="url(#b2)"/>
<path d="M224 50Q210 86 213 118" fill="none" stroke="#d8dcea" stroke-width="3" opacity=".7" filter="url(#b2)"/>
<path d="M208 70Q199 98 200 118" fill="none" stroke="#c8cee0" stroke-width="2" opacity=".6" filter="url(#b2)"/>
<path d="M232 46Q258 30 292 31" fill="none" stroke="#9aa6c8" stroke-width="4" opacity=".55" filter="url(#b2)"/>
<path d="M240 54Q262 40 296 42M246 64Q270 50 300 54" fill="none" stroke="#6f7ea8" stroke-width="2" opacity=".5" filter="url(#b2)"/>
<path d="M318 40Q348 72 368 108" fill="none" stroke="#4f7fb3" stroke-width="10" opacity=".85" filter="url(#b4)"/>
<path d="M326 42Q352 68 370 100" fill="none" stroke="#8db4da" stroke-width="3" opacity=".6" filter="url(#b2)"/>
<path d="M304 38Q262 50 228 104M305 48Q270 64 240 116M305 60Q278 80 254 122M306 74Q286 98 268 140M306 90Q294 116 276 156M300 34Q250 36 216 84M296 30Q246 28 210 70" fill="none" stroke="#3a4a7c" stroke-width="1.300" opacity=".6"/>
<path d="M312 36Q352 58 386 128M313 48Q348 76 376 128M312 62Q340 92 362 120M311 78Q330 104 346 124M322 32Q362 52 390 112" fill="none" stroke="#33487a" stroke-width="1.300" opacity=".6"/>
<path d="M303 44Q266 58 236 108" fill="none" stroke="#7f8db4" stroke-width="2.500" opacity=".35" filter="url(#b2)"/>
<path d="M268 160Q276 150 290 145Q320 134 342 124" fill="none" stroke="#6272a0" stroke-width="1.600" opacity=".5"/>
<path d="M308 32Q300 60 306 100" fill="none" stroke="#050818" stroke-width="6" opacity=".7" filter="url(#b4)"/>
<path d="M350 60Q376 92 386 140" fill="none" stroke="#2c3c66" stroke-width="2" opacity=".6"/>
</g>
<!-- hand & arm -->
<path d="M147.900 386L153.750 356.600Q160 340 167.500 327.300Q173 312 173.300 300Q172 287 167.500 276.600Q158 266 155.700 255.100Q156 248 159.500 243.300Q165 231 173.300 221.850Q178 213 185 208.200L200.500 212.100L212.300 198.400Q222 194 232 197L249.500 208.200Q250 220 247.500 229.600Q240 243 228 253.100Q225 270 226 288.300Q227 302 229.900 315.600Q226 332 218.200 346.600L208.500 386Z" fill="#e0b6b1"/>
<path d="M155.700 255.100Q158 266 167.500 276.600Q172 287 173.300 300Q173 312 167.500 327.300Q160 340 153.750 356.600L147.900 386" fill="none" stroke="#b98b8e" stroke-width="5" opacity=".6" filter="url(#b2)"/>
<path d="M228 253Q225 270 226 288Q227 302 230 316Q226 332 218 346L209 386" fill="none" stroke="#bf9193" stroke-width="6" opacity=".55" filter="url(#b2)"/>
<path d="M173 222Q165 232 160 244Q156 250 157 256" fill="none" stroke="#f0d2cd" stroke-width="5" opacity=".7" filter="url(#b2)"/>
<path d="M200 226L232 200M210 236L243 212M222 246L247 226" stroke="#c79a9b" stroke-width="2" opacity=".5" filter="url(#b2)"/>
<ellipse cx="196" cy="300" rx="14" ry="40" fill="#eccac5" opacity=".5" filter="url(#b8)"/>
<path d="M250 210Q252 232 232 254Q226 275 228 300" fill="none" stroke="#b58889" stroke-width="8" opacity=".5" filter="url(#b4)"/>
<path d="M186 209Q176 222 170 236M200 213Q188 228 183 246M214 226Q200 240 196 258" fill="none" stroke="#c89e9e" stroke-width="1.500" opacity=".7" filter="url(#b2)"/>
<ellipse cx="186" cy="268" rx="5" ry="3.500" fill="#caa0a4" opacity=".6" filter="url(#b2)"/><ellipse cx="200" cy="272" rx="5" ry="3.500" fill="#caa0a4" opacity=".6" filter="url(#b2)"/><ellipse cx="213" cy="268" rx="4" ry="3" fill="#caa0a4" opacity=".5" filter="url(#b2)"/>
<!-- ring -->
<path d="M206 244L215 251" stroke="#9a6a50" stroke-width="2.2"/><circle cx="211" cy="248" r="2" fill="#f0d8d0"/>
<!-- nails -->
<g fill="#97296f">
<ellipse cx="219.800" cy="199" rx="6.500" ry="3.200" transform="rotate(-18 219.800 199)"/>
<ellipse cx="233.900" cy="200.400" rx="6.800" ry="3.600" transform="rotate(-28 233.900 200.400)"/>
<ellipse cx="243.200" cy="211.200" rx="6.500" ry="3.500" transform="rotate(-30 243.200 211.200)"/>
<ellipse cx="243.700" cy="225.300" rx="4.500" ry="2.400" transform="rotate(-50 243.700 225.300)"/>
</g>
<!-- cigarette -->
<path d="M165.500 175.600L205.100 214.600" stroke="url(#acig)" stroke-width="5.500" stroke-linecap="butt"/>
<path d="M165.500 175.600L205.100 214.600" stroke="#e9e9e9" stroke-width="5.500"/>
<path d="M167.300 173.700L206.800 212.700" stroke="#8e8e8e" stroke-width="1.600" opacity=".8"/>
<path d="M201.200 210.700L205.600 215" stroke="#d9950f" stroke-width="6"/>
</symbol></defs></svg>
<svg class="a" style="left:392.5px;top:309.4px" width="504" height="386" viewBox="0 0 504 386"><defs><clipPath id="rr"><rect width="504" height="386" rx="50" ry="50"/></clipPath></defs><g clip-path="url(#rr)"><use href="#art" width="504" height="386"/></g><rect x=".3" y=".3" width="503.4" height="385.4" rx="50" fill="none" stroke="#3f86e0" stroke-width="1"/></svg>
<svg class="a" style="left:392.5px;top:309.4px" width="504" height="386" viewBox="0 0 504 386"><rect x="0" y="0" width="504" height="386" fill="none" stroke="#4a84cc" stroke-width=".9"/><path d="M252 0V-30" stroke="#4a84cc" stroke-width=".9"/><circle cx="0" cy="0" r="3.1" fill="#2f74c5" stroke="#fff" stroke-width="1"/><circle cx="252" cy="0" r="3.1" fill="#2f74c5" stroke="#fff" stroke-width="1"/><circle cx="504" cy="0" r="3.1" fill="#2f74c5" stroke="#fff" stroke-width="1"/><circle cx="0" cy="193" r="3.1" fill="#2f74c5" stroke="#fff" stroke-width="1"/><circle cx="504" cy="193" r="3.1" fill="#2f74c5" stroke="#fff" stroke-width="1"/><circle cx="0" cy="386" r="3.1" fill="#2f74c5" stroke="#fff" stroke-width="1"/><circle cx="252" cy="386" r="3.1" fill="#2f74c5" stroke="#fff" stroke-width="1"/><circle cx="504" cy="386" r="3.1" fill="#2f74c5" stroke="#fff" stroke-width="1"/><circle cx="252" cy="-30" r="3.3" fill="#fff" stroke="#2f74c5" stroke-width="1.4"/><circle cx="14.6" cy="14.3" r="3.1" fill="#e8622a" stroke="#fff" stroke-width="1"/></svg>
<svg class="a" style="left:1640.60px;top:137.00px;" width="8" height="8" viewBox="0 0 8 8"><path d="M4 .5L7.8 7.5H.2Z" fill="#8c8c8c"/></svg>
<svg class="a" style="left:1640.60px;top:980.00px;" width="8" height="8" viewBox="0 0 8 8"><path d="M4 7.5L7.8 .5H.2Z" fill="#8c8c8c"/></svg>
<div class="a" style="left:1642.30px;top:456.00px;width:5.50px;height:265.00px;background:#8a8a8a;border-radius:3px;"></div>
<svg class="a" style="left:43.00px;top:998.00px;" width="8" height="8" viewBox="0 0 8 8"><path d="M.5 4L7.5 .2V7.8Z" fill="#8c8c8c"/></svg>
<svg class="a" style="left:1622.00px;top:998.00px;" width="8" height="8" viewBox="0 0 8 8"><path d="M7.5 4L.5 .2V7.8Z" fill="#8c8c8c"/></svg>
<div class="a" style="left:637.50px;top:999.00px;width:516.50px;height:7.00px;background:#8a8a8a;border-radius:3.5px;"></div>
<div class="a" style="left:1100.50px;top:124.50px;width:406.50px;height:605.50px;background:#1f1f1f;"></div>
<div class="a" style="left:1101.50px;top:125.50px;width:404.50px;height:24.50px;background:#262626;"></div>
<div class="a" style="left:1120.50px;top:128.00px;width:47.50px;height:22.00px;background:#363636;"></div>
<div class="a" style="left:1109.00px;top:132.50px;width:1.00px;height:11.00px;background:#5a5a5a;"></div>
<div class="a" style="left:1112.50px;top:132.50px;width:1.00px;height:11.00px;background:#5a5a5a;"></div>
<span class="t" style="left:1125.00px;top:130.64px;font-size:12px;line-height:16px;color:#efefef;letter-spacing:-0.804px;">Calques</span>
<svg class="a" style="left:1470.00px;top:133.50px;" width="11" height="9" viewBox="0 0 11 9"><path d="M0 .8H8M0 3.2H8M0 5.6H8" stroke="#e8e8e8" stroke-width="1.3"/><rect x="9" y="7" width="1.6" height="1.6" fill="#e8e8e8"/></svg>
<svg class="a" style="left:1492.50px;top:133.50px;" width="9" height="9" viewBox="0 0 9 9"><path d="M1 1L8 8M8 1L1 8" stroke="#f2f2f2" stroke-width="1.9"/></svg>
<div class="a" style="left:1101.50px;top:150.00px;width:404.50px;height:28.50px;background:#373737;"></div>
<span class="t" style="left:1110.00px;top:156.96px;font-size:10.5px;line-height:16px;color:#e4e4e4;letter-spacing:-0.400px;">Opacité:</span>
<div class="a" style="left:1150.70px;top:154.30px;width:74.00px;height:19.00px;background:#272727;border-radius:2px;"></div>
<span class="t" style="left:1156.30px;top:156.02px;font-size:11.5px;line-height:16px;color:#ececec;letter-spacing:-0.602px;">100 %</span>
<svg class="a" style="left:1214.00px;top:162.00px;" width="7" height="4" viewBox="0 0 7 4"><path d="M0 0H7L3.5 4Z" fill="#eee"/></svg>
<div class="a" style="left:1229.40px;top:154.30px;width:228.00px;height:19.00px;background:#272727;border-radius:2px;"></div>
<span class="t" style="left:1234.40px;top:157.02px;font-size:11.5px;line-height:16px;color:#ececec;letter-spacing:-0.243px;">Normal</span>
<svg class="a" style="left:1446.40px;top:162.50px;" width="7" height="4" viewBox="0 0 7 4"><path d="M0 0H7L3.5 4Z" fill="#eee"/></svg>
<svg class="a" style="left:1462.70px;top:157.50px" width="13.0" height="13.0" viewBox="-6.5 -6.5 13.0 13.0"><rect x="-1.43" y="-6.50" width="2.86" height="3.25" transform="rotate(0)" fill="#b8b8b8"/><rect x="-1.43" y="-6.50" width="2.86" height="3.25" transform="rotate(45)" fill="#b8b8b8"/><rect x="-1.43" y="-6.50" width="2.86" height="3.25" transform="rotate(90)" fill="#b8b8b8"/><rect x="-1.43" y="-6.50" width="2.86" height="3.25" transform="rotate(135)" fill="#b8b8b8"/><rect x="-1.43" y="-6.50" width="2.86" height="3.25" transform="rotate(180)" fill="#b8b8b8"/><rect x="-1.43" y="-6.50" width="2.86" height="3.25" transform="rotate(225)" fill="#b8b8b8"/><rect x="-1.43" y="-6.50" width="2.86" height="3.25" transform="rotate(270)" fill="#b8b8b8"/><rect x="-1.43" y="-6.50" width="2.86" height="3.25" transform="rotate(315)" fill="#b8b8b8"/><circle r="4.68" fill="#b8b8b8"/><circle r="1.95" fill="#434343"/></svg>
<svg class="a" style="left:1486.00px;top:157.00px;" width="10" height="13" viewBox="0 0 10 13"><path d="M2.4 6V3.6A2.6 2.6 0 0 1 7.6 3.600V6" fill="none" stroke="#a8a8a8" stroke-width="1.500"/><rect x=".8" y="5.600" width="8.400" height="7" rx="1" fill="#a8a8a8"/></svg>
<div class="a" style="left:1101.50px;top:178.50px;width:404.50px;height:528.50px;background:#343434;"></div>
<div class="a" style="left:1101.50px;top:178.50px;width:386.50px;height:66.50px;background:#5e8fd4;"></div>
<div class="a" style="left:1101.50px;top:244.50px;width:386.50px;height:1.20px;background:#111a2c;"></div>
<div class="a" style="left:1101.50px;top:245.70px;width:386.50px;height:66.00px;background:#363636;"></div>
<div class="a" style="left:1101.50px;top:311.70px;width:386.50px;height:1.20px;background:#111;"></div>
<svg class="a" style="left:1105.00px;top:205.00px;" width="14" height="14" viewBox="0 0 14 14"><circle cx="7" cy="7" r="6.8" fill="#1e1e1e"/><path d="M2.6 4.2H11.400L7 11.400Z" fill="#e0cfc4"/></svg>
<div class="a" style="left:1123.30px;top:180.30px;width:63.00px;height:63.00px;background:#000;"></div>
<svg class="a" style="left:1124.30px;top:181.30px;" width="61" height="61" viewBox="0 0 61 61"><defs><clipPath id="tc1123"><rect width="61" height="61"/></clipPath></defs><g clip-path="url(#tc1123)"><rect width="61" height="61" fill="#fff"/><path d="M0.0 0.0h4.5v4.5h-4.5zM9.0 0.0h4.5v4.5h-4.5zM18.0 0.0h4.5v4.5h-4.5zM27.0 0.0h4.5v4.5h-4.5zM36.0 0.0h4.5v4.5h-4.5zM45.0 0.0h4.5v4.5h-4.5zM54.0 0.0h4.5v4.5h-4.5zM4.5 4.5h4.5v4.5h-4.5zM13.5 4.5h4.5v4.5h-4.5zM22.5 4.5h4.5v4.5h-4.5zM31.5 4.5h4.5v4.5h-4.5zM40.5 4.5h4.5v4.5h-4.5zM49.5 4.5h4.5v4.5h-4.5zM58.5 4.5h4.5v4.5h-4.5zM0.0 9.0h4.5v4.5h-4.5zM9.0 9.0h4.5v4.5h-4.5zM18.0 9.0h4.5v4.5h-4.5zM27.0 9.0h4.5v4.5h-4.5zM36.0 9.0h4.5v4.5h-4.5zM45.0 9.0h4.5v4.5h-4.5zM54.0 9.0h4.5v4.5h-4.5zM4.5 13.5h4.5v4.5h-4.5zM13.5 13.5h4.5v4.5h-4.5zM22.5 13.5h4.5v4.5h-4.5zM31.5 13.5h4.5v4.5h-4.5zM40.5 13.5h4.5v4.5h-4.5zM49.5 13.5h4.5v4.5h-4.5zM58.5 13.5h4.5v4.5h-4.5zM0.0 18.0h4.5v4.5h-4.5zM9.0 18.0h4.5v4.5h-4.5zM18.0 18.0h4.5v4.5h-4.5zM27.0 18.0h4.5v4.5h-4.5zM36.0 18.0h4.5v4.5h-4.5zM45.0 18.0h4.5v4.5h-4.5zM54.0 18.0h4.5v4.5h-4.5zM4.5 22.5h4.5v4.5h-4.5zM13.5 22.5h4.5v4.5h-4.5zM22.5 22.5h4.5v4.5h-4.5zM31.5 22.5h4.5v4.5h-4.5zM40.5 22.5h4.5v4.5h-4.5zM49.5 22.5h4.5v4.5h-4.5zM58.5 22.5h4.5v4.5h-4.5zM0.0 27.0h4.5v4.5h-4.5zM9.0 27.0h4.5v4.5h-4.5zM18.0 27.0h4.5v4.5h-4.5zM27.0 27.0h4.5v4.5h-4.5zM36.0 27.0h4.5v4.5h-4.5zM45.0 27.0h4.5v4.5h-4.5zM54.0 27.0h4.5v4.5h-4.5zM4.5 31.5h4.5v4.5h-4.5zM13.5 31.5h4.5v4.5h-4.5zM22.5 31.5h4.5v4.5h-4.5zM31.5 31.5h4.5v4.5h-4.5zM40.5 31.5h4.5v4.5h-4.5zM49.5 31.5h4.5v4.5h-4.5zM58.5 31.5h4.5v4.5h-4.5zM0.0 36.0h4.5v4.5h-4.5zM9.0 36.0h4.5v4.5h-4.5zM18.0 36.0h4.5v4.5h-4.5zM27.0 36.0h4.5v4.5h-4.5zM36.0 36.0h4.5v4.5h-4.5zM45.0 36.0h4.5v4.5h-4.5zM54.0 36.0h4.5v4.5h-4.5zM4.5 40.5h4.5v4.5h-4.5zM13.5 40.5h4.5v4.5h-4.5zM22.5 40.5h4.5v4.5h-4.5zM31.5 40.5h4.5v4.5h-4.5zM40.5 40.5h4.5v4.5h-4.5zM49.5 40.5h4.5v4.5h-4.5zM58.5 40.5h4.5v4.5h-4.5zM0.0 45.0h4.5v4.5h-4.5zM9.0 45.0h4.5v4.5h-4.5zM18.0 45.0h4.5v4.5h-4.5zM27.0 45.0h4.5v4.5h-4.5zM36.0 45.0h4.5v4.5h-4.5zM45.0 45.0h4.5v4.5h-4.5zM54.0 45.0h4.5v4.5h-4.5zM4.5 49.5h4.5v4.5h-4.5zM13.5 49.5h4.5v4.5h-4.5zM22.5 49.5h4.5v4.5h-4.5zM31.5 49.5h4.5v4.5h-4.5zM40.5 49.5h4.5v4.5h-4.5zM49.5 49.5h4.5v4.5h-4.5zM58.5 49.5h4.5v4.5h-4.5zM0.0 54.0h4.5v4.5h-4.5zM9.0 54.0h4.5v4.5h-4.5zM18.0 54.0h4.5v4.5h-4.5zM27.0 54.0h4.5v4.5h-4.5zM36.0 54.0h4.5v4.5h-4.5zM45.0 54.0h4.5v4.5h-4.5zM54.0 54.0h4.5v4.5h-4.5zM4.5 58.5h4.5v4.5h-4.5zM13.5 58.5h4.5v4.5h-4.5zM22.5 58.5h4.5v4.5h-4.5zM31.5 58.5h4.5v4.5h-4.5zM40.5 58.5h4.5v4.5h-4.5zM49.5 58.5h4.5v4.5h-4.5zM58.5 58.5h4.5v4.5h-4.5z" fill="#d8d8d8"/><defs><clipPath id="tr1123"><rect x=".6" y="7.600" width="59.800" height="46.500" rx="5"/></clipPath></defs><g clip-path="url(#tr1123)"><use href="#art" x=".6" y="7.600" width="59.800" height="46.500"/></g></g></svg>
<div class="a" style="left:1133.70px;top:247.50px;width:63.00px;height:63.00px;background:#000;"></div>
<svg class="a" style="left:1134.70px;top:248.50px;" width="61" height="61" viewBox="0 0 61 61"><defs><clipPath id="tc1133"><rect width="61" height="61"/></clipPath></defs><g clip-path="url(#tc1133)"><rect width="61" height="61" fill="#fff"/><path d="M0.0 0.0h4.5v4.5h-4.5zM9.0 0.0h4.5v4.5h-4.5zM18.0 0.0h4.5v4.5h-4.5zM27.0 0.0h4.5v4.5h-4.5zM36.0 0.0h4.5v4.5h-4.5zM45.0 0.0h4.5v4.5h-4.5zM54.0 0.0h4.5v4.5h-4.5zM4.5 4.5h4.5v4.5h-4.5zM13.5 4.5h4.5v4.5h-4.5zM22.5 4.5h4.5v4.5h-4.5zM31.5 4.5h4.5v4.5h-4.5zM40.5 4.5h4.5v4.5h-4.5zM49.5 4.5h4.5v4.5h-4.5zM58.5 4.5h4.5v4.5h-4.5zM0.0 9.0h4.5v4.5h-4.5zM9.0 9.0h4.5v4.5h-4.5zM18.0 9.0h4.5v4.5h-4.5zM27.0 9.0h4.5v4.5h-4.5zM36.0 9.0h4.5v4.5h-4.5zM45.0 9.0h4.5v4.5h-4.5zM54.0 9.0h4.5v4.5h-4.5zM4.5 13.5h4.5v4.5h-4.5zM13.5 13.5h4.5v4.5h-4.5zM22.5 13.5h4.5v4.5h-4.5zM31.5 13.5h4.5v4.5h-4.5zM40.5 13.5h4.5v4.5h-4.5zM49.5 13.5h4.5v4.5h-4.5zM58.5 13.5h4.5v4.5h-4.5zM0.0 18.0h4.5v4.5h-4.5zM9.0 18.0h4.5v4.5h-4.5zM18.0 18.0h4.5v4.5h-4.5zM27.0 18.0h4.5v4.5h-4.5zM36.0 18.0h4.5v4.5h-4.5zM45.0 18.0h4.5v4.5h-4.5zM54.0 18.0h4.5v4.5h-4.5zM4.5 22.5h4.5v4.5h-4.5zM13.5 22.5h4.5v4.5h-4.5zM22.5 22.5h4.5v4.5h-4.5zM31.5 22.5h4.5v4.5h-4.5zM40.5 22.5h4.5v4.5h-4.5zM49.5 22.5h4.5v4.5h-4.5zM58.5 22.5h4.5v4.5h-4.5zM0.0 27.0h4.5v4.5h-4.5zM9.0 27.0h4.5v4.5h-4.5zM18.0 27.0h4.5v4.5h-4.5zM27.0 27.0h4.5v4.5h-4.5zM36.0 27.0h4.5v4.5h-4.5zM45.0 27.0h4.5v4.5h-4.5zM54.0 27.0h4.5v4.5h-4.5zM4.5 31.5h4.5v4.5h-4.5zM13.5 31.5h4.5v4.5h-4.5zM22.5 31.5h4.5v4.5h-4.5zM31.5 31.5h4.5v4.5h-4.5zM40.5 31.5h4.5v4.5h-4.5zM49.5 31.5h4.5v4.5h-4.5zM58.5 31.5h4.5v4.5h-4.5zM0.0 36.0h4.5v4.5h-4.5zM9.0 36.0h4.5v4.5h-4.5zM18.0 36.0h4.5v4.5h-4.5zM27.0 36.0h4.5v4.5h-4.5zM36.0 36.0h4.5v4.5h-4.5zM45.0 36.0h4.5v4.5h-4.5zM54.0 36.0h4.5v4.5h-4.5zM4.5 40.5h4.5v4.5h-4.5zM13.5 40.5h4.5v4.5h-4.5zM22.5 40.5h4.5v4.5h-4.5zM31.5 40.5h4.5v4.5h-4.5zM40.5 40.5h4.5v4.5h-4.5zM49.5 40.5h4.5v4.5h-4.5zM58.5 40.5h4.5v4.5h-4.5zM0.0 45.0h4.5v4.5h-4.5zM9.0 45.0h4.5v4.5h-4.5zM18.0 45.0h4.5v4.5h-4.5zM27.0 45.0h4.5v4.5h-4.5zM36.0 45.0h4.5v4.5h-4.5zM45.0 45.0h4.5v4.5h-4.5zM54.0 45.0h4.5v4.5h-4.5zM4.5 49.5h4.5v4.5h-4.5zM13.5 49.5h4.5v4.5h-4.5zM22.5 49.5h4.5v4.5h-4.5zM31.5 49.5h4.5v4.5h-4.5zM40.5 49.5h4.5v4.5h-4.5zM49.5 49.5h4.5v4.5h-4.5zM58.5 49.5h4.5v4.5h-4.5zM0.0 54.0h4.5v4.5h-4.5zM9.0 54.0h4.5v4.5h-4.5zM18.0 54.0h4.5v4.5h-4.5zM27.0 54.0h4.5v4.5h-4.5zM36.0 54.0h4.5v4.5h-4.5zM45.0 54.0h4.5v4.5h-4.5zM54.0 54.0h4.5v4.5h-4.5zM4.5 58.5h4.5v4.5h-4.5zM13.5 58.5h4.5v4.5h-4.5zM22.5 58.5h4.5v4.5h-4.5zM31.5 58.5h4.5v4.5h-4.5zM40.5 58.5h4.5v4.5h-4.5zM49.5 58.5h4.5v4.5h-4.5zM58.5 58.5h4.5v4.5h-4.5z" fill="#d8d8d8"/><use href="#art" x="0" y="8.200" width="61" height="44.500"/></g></svg>
<span class="t" style="left:1191.60px;top:205.14px;font-size:12px;line-height:16px;color:#cfe0f6;letter-spacing:-0.143px;">(Rectangle arrondi)</span>
<span class="t" style="left:1201.30px;top:272.14px;font-size:12px;line-height:16px;color:#fff;letter-spacing:-0.634px;font-weight:700;">BRUNE</span>
<span class="t" style="left:1244.00px;top:272.14px;font-size:12px;line-height:16px;color:#d0d0d0;letter-spacing:-0.135px;">(Image)</span>
<svg class="a" style="left:1471.90px;top:205.70px;" width="12.4" height="12.4" viewBox="0 0 12.4 12.4"><rect x=".6" y=".6" width="11.200" height="11.200" rx="1.5" fill="#6c99da" stroke="#a9c4ea" stroke-width="1.100"/><path d="M3 6.400L5.400 9.200L9.400 3" stroke="#b8d0f0" stroke-width="1.500" fill="none"/></svg>
<svg class="a" style="left:1471.90px;top:272.80px;" width="12.4" height="12.4" viewBox="0 0 12.4 12.4"><rect x=".6" y=".6" width="11.200" height="11.200" rx="1.5" fill="#444" stroke="#c8c8c8" stroke-width="1.100"/><path d="M3 6.400L5.400 9.200L9.400 3" stroke="#f0f0f0" stroke-width="1.500" fill="none"/></svg>
<div class="a" style="left:1101.50px;top:707.00px;width:404.50px;height:22.00px;background:#414141;"></div>
<div class="a" style="left:1107.00px;top:708.50px;width:21.00px;height:19.50px;background:#2a2a2a;"></div>
<svg class="a" style="left:1110.00px;top:711.00px;" width="15" height="14" viewBox="0 0 15 14"><path d="M0 1.500L7.500 5L15 1.500L7.500 .5Z" fill="#bdbdbd"/><path d="M0 2.500L7.500 6.500L15 2.500V5L7.500 9L0 5Z" fill="#c8c8c8"/><path d="M0 6.500L7.500 10.500L15 6.500V9L7.500 13L0 9Z" fill="#c8c8c8"/></svg>
<svg class="a" style="left:1333.80px;top:712.50px;" width="14" height="10.5" viewBox="0 0 14 10.5"><rect width="14" height="10.500" fill="#b4b4b4"/><circle cx="7" cy="5.250" r="3.600" fill="#414141"/></svg>
<svg class="a" style="left:1356.30px;top:711.30px;" width="13" height="13" viewBox="0 0 13 13"><circle cx="6.500" cy="6.500" r="6" fill="#b4b4b4"/><path d="M9.500 1.500A6 6 0 0 1 4 11.800Q5 6 9.500 1.500Z" fill="#414141"/></svg>
<span class="t" style="left:1378.5px;top:708.5px;font-family:'Liberation Serif',serif;font-style:italic;font-size:14px;line-height:16px;color:#b4b4b4;letter-spacing:-.5px">fx</span>
<svg class="a" style="left:1401.90px;top:711.50px;" width="10" height="12.5" viewBox="0 0 10 12.5"><path d="M0 0H10L6 6.250L10 12.500H0L4 6.250Z" fill="#b4b4b4"/></svg>
<svg class="a" style="left:1440.00px;top:711.50px;" width="14" height="11.5" viewBox="0 0 14 11.5"><path d="M0 1H5L6.500 2.500H14V11.500H0Z" fill="#b4b4b4"/></svg>
<svg class="a" style="left:1463.40px;top:712.00px;" width="11" height="11.5" viewBox="0 0 11 11.5"><rect width="11" height="11.5" fill="#b4b4b4"/><path d="M0.0 0.0h1.9v1.9h-1.9zM3.8 0.0h1.9v1.9h-1.9zM7.6 0.0h1.9v1.9h-1.9zM1.9 1.9h1.9v1.9h-1.9zM5.7 1.9h1.9v1.9h-1.9zM9.5 1.9h1.9v1.9h-1.9zM0.0 3.8h1.9v1.9h-1.9zM3.8 3.8h1.9v1.9h-1.9zM7.6 3.8h1.9v1.9h-1.9zM1.9 5.7h1.9v1.9h-1.9zM5.7 5.7h1.9v1.9h-1.9zM9.5 5.7h1.9v1.9h-1.9zM0.0 7.6h1.9v1.9h-1.9zM3.8 7.6h1.9v1.9h-1.9zM7.6 7.6h1.9v1.9h-1.9zM1.9 9.5h1.9v1.9h-1.9zM5.7 9.5h1.9v1.9h-1.9zM9.5 9.5h1.9v1.9h-1.9zM0.0 11.4h1.9v1.9h-1.9zM3.8 11.4h1.9v1.9h-1.9zM7.6 11.4h1.9v1.9h-1.9z" fill="#414141"/></svg>
<svg class="a" style="left:1485.80px;top:710.50px;" width="11" height="14" viewBox="0 0 11 14"><path d="M1.500 4H9.500L8.800 14H2.200Z" fill="#b4b4b4"/><rect x=".3" y="2" width="10.400" height="1.400" fill="#b4b4b4"/><rect x="3.800" y=".4" width="3.400" height="1.400" fill="#b4b4b4"/><path d="M3.800 5.500V12.500M5.500 5.500V12.500M7.200 5.500V12.500" stroke="#414141" stroke-width=".8"/></svg>
<div class="a" style="left:1654.80px;top:109.00px;width:265.20px;height:22.00px;background:#262626;"></div>
<div class="a" style="left:1662.50px;top:114.50px;width:1.00px;height:11.00px;background:#555;"></div>
<div class="a" style="left:1665.50px;top:114.50px;width:1.00px;height:11.00px;background:#555;"></div>
<span class="t" style="left:1678.30px;top:111.72px;font-size:11.5px;line-height:16px;color:#d0d0d0;letter-spacing:-0.427px;">Hgm</span>
<div class="a" style="left:1707.50px;top:110.00px;width:48.00px;height:21.00px;background:#424242;"></div>
<span class="t" style="left:1712.00px;top:111.72px;font-size:11.5px;line-height:16px;color:#f4f4f4;letter-spacing:-0.253px;">Couleur</span>
<span class="t" style="left:1760.30px;top:111.72px;font-size:11.5px;line-height:16px;color:#d0d0d0;letter-spacing:-1.239px;">Éch</span>
<span class="t" style="left:1787.00px;top:111.72px;font-size:11.5px;line-height:16px;color:#d0d0d0;letter-spacing:-0.514px;">Pinceaux</span>
<svg class="a" style="left:1902.50px;top:115.50px;" width="11" height="9" viewBox="0 0 11 9"><path d="M0 .8H8M0 3.200H8M0 5.600H8" stroke="#e8e8e8" stroke-width="1.300"/><rect x="9" y="7" width="1.600" height="1.600" fill="#e8e8e8"/></svg>
<svg class="a" style="left:1668.00px;top:146.00px;" width="40" height="42" viewBox="0 0 40 42"><defs><clipPath id="sw1"><circle cx="26.900" cy="28.100" r="10.400"/></clipPath><clipPath id="sw2"><circle cx="8.700" cy="34" r="4.300"/></clipPath></defs>
<circle cx="14.700" cy="14.600" r="12.400" fill="#585858"/><circle cx="14.700" cy="14.600" r="11.400" fill="#000"/>
<circle cx="26.900" cy="28.100" r="12.200" fill="#4a4a4a"/><circle cx="26.900" cy="28.100" r="10.400" fill="#fff"/>
<g clip-path="url(#sw1)"><path d="M14 40L40 16" stroke="#f0342c" stroke-width="3.200"/></g>
<circle cx="8.700" cy="34" r="5.600" fill="#2c2c2c"/><circle cx="8.700" cy="34" r="4.300" fill="#fff"/>
<g clip-path="url(#sw2)"><path d="M3 39.500L14.500 28.500" stroke="#f0342c" stroke-width="2.200"/></g></svg>
<svg class="a" style="left:1695.00px;top:147.50px;" width="13" height="13" viewBox="0 0 13 13"><path d="M2.500 4Q7 1.500 10.500 8.500" fill="none" stroke="#d8d8d8" stroke-width="1.200"/><path d="M1 2.200L5 2.800L2.800 6Z" fill="#d8d8d8"/><path d="M12.500 9.800L8.500 9.500L10.800 6.200Z" fill="#d8d8d8"/></svg>
<svg class="a" style="left:1717.00px;top:148.00px;" width="17" height="17" viewBox="0 0 17 17"><path d="M1.500 15.500L3 11.500L9 5.500L11.500 8L5.500 14Z" fill="#b4b4b4"/><path d="M8 4.500L12.500 9" stroke="#8a8a8a" stroke-width="1.800"/><path d="M10 4.800Q11.500 1.200 14 1Q16.500 1.500 15.800 4Q14.500 6 12 7Z" fill="#c9943c"/></svg>
<svg class="a" style="left:1737.80px;top:149.00px;" width="14" height="14" viewBox="0 0 14 14"><circle cx="7" cy="7" r="7" fill="#ff0000"/></svg>
<div class="a" style="left:1714px;top:168.200px;width:148px;height:148px;border-radius:50%;background:conic-gradient(from 90deg,#ff0000,#ff8000 8.3%,#ffff00 16.7%,#80ff00 25%,#00ff00 33.300%,#00ff80 41.700%,#00ffff 50%,#0080ff 58.300%,#0000ff 66.700%,#8000ff 75%,#ff00ff 83.300%,#ff0080 91.700%,#ff0000);"></div>
<div class="a" style="left:1728px;top:182.200px;width:120px;height:120px;border-radius:50%;background:#424242;"></div>
<svg class="a" style="left:1758.50px;top:191.70px;" width="89" height="101" viewBox="0 0 89 101"><defs><linearGradient id="tr1" x1="0" y1="0" x2="0" y2="1"><stop offset="0" stop-color="#000"/><stop offset="1" stop-color="#fff"/></linearGradient>
<linearGradient id="tr2" x1="0" y1=".5" x2="1" y2=".5"><stop offset="0" stop-color="#ff0000" stop-opacity="0"/><stop offset="1" stop-color="#ff0000"/></linearGradient></defs>
<path d="M0 0L88.500 50.500L0 101Z" fill="url(#tr1)"/><path d="M0 0L88.500 50.500L0 101Z" fill="url(#tr2)"/></svg>
<svg class="a" style="left:1848.80px;top:236.20px;" width="12" height="12" viewBox="0 0 12 12"><circle cx="6" cy="6" r="4.700" fill="none" stroke="#fff" stroke-width="1.600"/></svg>
<svg class="a" style="left:1752.30px;top:287.90px;" width="12" height="12" viewBox="0 0 12 12"><circle cx="6" cy="6" r="4.700" fill="#fff" stroke="#555" stroke-width=".8"/><circle cx="6" cy="6" r="5.300" fill="none" stroke="#eee" stroke-width="1"/></svg>
<span class="t" style="left:1665.40px;top:282.91px;font-size:9.5px;line-height:16px;color:#f0f0f0;letter-spacing:-0.106px;">H: 0</span>
<span class="t" style="left:1667.00px;top:295.81px;font-size:9.5px;line-height:16px;color:#f0f0f0;letter-spacing:-0.350px;">S: 0</span>
<span class="t" style="left:1667.50px;top:308.71px;font-size:9.5px;line-height:16px;color:#f0f0f0;letter-spacing:0.015px;">L: 100</span>
<span class="t" style="left:1669.00px;top:325.36px;font-size:10.5px;line-height:16px;color:#565656;letter-spacing:-0.327px;">Opacité</span>
<svg class="a" style="left:1674.90px;top:344.00px;" width="12" height="12" viewBox="0 0 12 12"><circle cx="6" cy="6" r="6" fill="#9c9c9c"/></svg>
<div class="a" style="left:1695.00px;top:345.50px;width:135.00px;height:9.00px;background:#3c3c3c;border-radius:4.500px;border:1px solid #383838;box-sizing:border-box;"></div>
<svg class="a" style="left:1830.00px;top:344.20px;" width="12" height="12" viewBox="0 0 12 12"><circle cx="6" cy="6" r="5" fill="none" stroke="#b0b0b0" stroke-width="1"/></svg>
<div class="a" style="left:1846.30px;top:339.70px;width:59.00px;height:18.50px;background:#3a3a3a;border:1px solid #2e2e2e;box-sizing:border-box;border-radius:2px;"></div>
<div class="a" style="left:1890.00px;top:340.50px;width:1.00px;height:17.00px;background:#2e2e2e;"></div>
<span class="t" style="left:1853.00px;top:341.66px;font-size:10.5px;line-height:16px;color:#8a8a8a;letter-spacing:-0.154px;">100 %</span>
<svg class="a" style="left:1894.80px;top:348.00px;" width="7" height="4" viewBox="0 0 7 4"><path d="M0 0H7L3.500 4Z" fill="#9a9a9a"/></svg>
<div class="a" style="left:1655.00px;top:367.00px;width:265.00px;height:2.00px;background:#3a3a3a;"></div>
<div class="a" style="left:1654.80px;top:369.00px;width:265.20px;height:22.50px;background:#262626;"></div>
<div class="a" style="left:1662.50px;top:374.50px;width:1.00px;height:11.00px;background:#555;"></div>
<div class="a" style="left:1665.50px;top:374.50px;width:1.00px;height:11.00px;background:#555;"></div>
<span class="t" style="left:1678.20px;top:372.22px;font-size:11.5px;line-height:16px;color:#d0d0d0;letter-spacing:-0.577px;">Réglage</span>
<div class="a" style="left:1722.80px;top:370.00px;width:35.80px;height:21.50px;background:#424242;"></div>
<span class="t" style="left:1727.30px;top:372.22px;font-size:11.5px;line-height:16px;color:#f4f4f4;letter-spacing:-0.482px;">Effets</span>
<span class="t" style="left:1763.90px;top:372.22px;font-size:11.5px;line-height:16px;color:#d0d0d0;letter-spacing:-0.569px;">Styles</span>
<span class="t" style="left:1801.70px;top:372.22px;font-size:11.5px;line-height:16px;color:#d0d0d0;letter-spacing:-0.432px;">Stock</span>
<span class="t" style="left:1662.60px;top:398.02px;font-size:11.5px;line-height:16px;color:#ececec;letter-spacing:-0.309px;">Opacité du remplissage:</span>
<div class="a" style="left:1784.50px;top:397.20px;width:74.00px;height:18.50px;background:#2c2c2c;border-radius:2px;"></div>
<span class="t" style="left:1790.00px;top:398.32px;font-size:11.5px;line-height:16px;color:#ececec;letter-spacing:-0.522px;">100 %</span>
<svg class="a" style="left:1848.40px;top:404.50px;" width="7" height="4" viewBox="0 0 7 4"><path d="M0 0H7L3.500 4Z" fill="#eee"/></svg>
<div class="a" style="left:1655.00px;top:424.50px;width:246.00px;height:1.00px;background:#2e2e2e;"></div>
<div class="a" style="left:1655.00px;top:425.50px;width:246.00px;height:34.00px;background:#393939;"></div>
<div class="a" style="left:1655.00px;top:459.50px;width:246.00px;height:1.00px;background:#2c2c2c;"></div>
<svg class="a" style="left:1665.50px;top:438.00px;" width="5" height="9" viewBox="0 0 5 9"><path d="M0 0L5 4.500L0 9Z" fill="#8a8a8a"/></svg>
<div class="a" style="left:1681.20px;top:438.30px;width:9.60px;height:9.60px;background:#5e5e5e;border-radius:1px;"></div>
<span class="t" style="left:1695.80px;top:435.22px;font-size:11.5px;line-height:16px;color:#f0f0f0;letter-spacing:-0.392px;">Flou gaussien</span>
<div class="a" style="left:1655.00px;top:460.55px;width:246.00px;height:34.00px;background:#393939;"></div>
<div class="a" style="left:1655.00px;top:494.55px;width:246.00px;height:1.00px;background:#2c2c2c;"></div>
<svg class="a" style="left:1665.50px;top:473.05px;" width="5" height="9" viewBox="0 0 5 9"><path d="M0 0L5 4.500L0 9Z" fill="#8a8a8a"/></svg>
<div class="a" style="left:1681.20px;top:473.35px;width:9.60px;height:9.60px;background:#5e5e5e;border-radius:1px;"></div>
<span class="t" style="left:1695.80px;top:470.27px;font-size:11.5px;line-height:16px;color:#f0f0f0;letter-spacing:-0.261px;">Ombre externe</span>
<div class="a" style="left:1655.00px;top:495.60px;width:246.00px;height:34.00px;background:#393939;"></div>
<div class="a" style="left:1655.00px;top:529.60px;width:246.00px;height:1.00px;background:#2c2c2c;"></div>
<svg class="a" style="left:1665.50px;top:508.10px;" width="5" height="9" viewBox="0 0 5 9"><path d="M0 0L5 4.500L0 9Z" fill="#8a8a8a"/></svg>
<div class="a" style="left:1681.20px;top:508.40px;width:9.60px;height:9.60px;background:#5e5e5e;border-radius:1px;"></div>
<span class="t" style="left:1695.80px;top:505.32px;font-size:11.5px;line-height:16px;color:#f0f0f0;letter-spacing:-0.193px;">Ombre interne</span>
<div class="a" style="left:1655.00px;top:530.65px;width:246.00px;height:34.00px;background:#393939;"></div>
<div class="a" style="left:1655.00px;top:564.65px;width:246.00px;height:1.00px;background:#2c2c2c;"></div>
<svg class="a" style="left:1665.50px;top:543.15px;" width="5" height="9" viewBox="0 0 5 9"><path d="M0 0L5 4.500L0 9Z" fill="#8a8a8a"/></svg>
<div class="a" style="left:1681.20px;top:543.45px;width:9.60px;height:9.60px;background:#5e5e5e;border-radius:1px;"></div>
<span class="t" style="left:1695.80px;top:540.37px;font-size:11.5px;line-height:16px;color:#f0f0f0;letter-spacing:-0.382px;">Lueur externe</span>
<div class="a" style="left:1655.00px;top:565.70px;width:246.00px;height:34.00px;background:#393939;"></div>
<div class="a" style="left:1655.00px;top:599.70px;width:246.00px;height:1.00px;background:#2c2c2c;"></div>
<svg class="a" style="left:1665.50px;top:578.20px;" width="5" height="9" viewBox="0 0 5 9"><path d="M0 0L5 4.500L0 9Z" fill="#8a8a8a"/></svg>
<div class="a" style="left:1681.20px;top:578.50px;width:9.60px;height:9.60px;background:#5e5e5e;border-radius:1px;"></div>
<span class="t" style="left:1695.80px;top:575.42px;font-size:11.5px;line-height:16px;color:#f0f0f0;letter-spacing:-0.259px;">Lueur interne</span>
<div class="a" style="left:1655.00px;top:600.75px;width:246.00px;height:34.00px;background:#393939;"></div>
<div class="a" style="left:1655.00px;top:634.75px;width:246.00px;height:1.00px;background:#2c2c2c;"></div>
<svg class="a" style="left:1665.50px;top:613.25px;" width="5" height="9" viewBox="0 0 5 9"><path d="M0 0L5 4.500L0 9Z" fill="#8a8a8a"/></svg>
<div class="a" style="left:1681.20px;top:613.55px;width:9.60px;height:9.60px;background:#5e5e5e;border-radius:1px;"></div>
<span class="t" style="left:1695.80px;top:610.47px;font-size:11.5px;line-height:16px;color:#f0f0f0;letter-spacing:-0.159px;">Contour</span>
<div class="a" style="left:1655.00px;top:635.80px;width:246.00px;height:34.00px;background:#393939;"></div>
<div class="a" style="left:1655.00px;top:669.80px;width:246.00px;height:1.00px;background:#2c2c2c;"></div>
<svg class="a" style="left:1665.50px;top:648.30px;" width="5" height="9" viewBox="0 0 5 9"><path d="M0 0L5 4.500L0 9Z" fill="#8a8a8a"/></svg>
<div class="a" style="left:1681.20px;top:648.60px;width:9.60px;height:9.60px;background:#5e5e5e;border-radius:1px;"></div>
<span class="t" style="left:1695.80px;top:645.52px;font-size:11.5px;line-height:16px;color:#f0f0f0;letter-spacing:-0.550px;">3D</span>
<div class="a" style="left:1655.00px;top:670.85px;width:246.00px;height:19.15px;background:#393939;"></div>
<div class="a" style="left:1655.00px;top:704.85px;width:246.00px;height:1.00px;background:#2c2c2c;"></div>
<div class="a" style="left:1655px;top:670.8px;width:246px;height:19.2px;overflow:hidden;"><div class="a" style="left:10.500px;top:12.500px;width:0;height:0;border-left:5px solid #8a8a8a;border-top:4.500px solid transparent;border-bottom:4.500px solid transparent;"></div><div class="a" style="left:26.200px;top:12.800px;width:9.600px;height:9.600px;background:#5e5e5e;"></div><span class="t" style="left:40.800px;top:9.500px;font-size:11.5px;line-height:16px;color:#f0f0f0;letter-spacing:-.3px">Biseau/Estampage</span></div>
<svg class="a" style="left:1906.70px;top:429.50px;" width="8" height="8" viewBox="0 0 8 8"><path d="M4 .5L7.800 7.500H.2Z" fill="#8c8c8c"/></svg>
<svg class="a" style="left:1906.70px;top:675.00px;" width="8" height="8" viewBox="0 0 8 8"><path d="M4 7.500L7.800 .5H.2Z" fill="#8c8c8c"/></svg>
<div class="a" style="left:1907.50px;top:443.00px;width:6.50px;height:168.50px;background:#8a8a8a;border-radius:3.250px;"></div>
<div class="a" style="left:1654.80px;top:689.00px;width:265.20px;height:24.60px;background:#262626;"></div>
<div class="a" style="left:1662.50px;top:696.50px;width:1.00px;height:11.00px;background:#555;"></div>
<div class="a" style="left:1665.50px;top:696.50px;width:1.00px;height:11.00px;background:#555;"></div>
<div class="a" style="left:1674.20px;top:692.00px;width:62.20px;height:21.60px;background:#424242;"></div>
<span class="t" style="left:1678.70px;top:694.32px;font-size:11.5px;line-height:16px;color:#f4f4f4;letter-spacing:-0.291px;">Navigateur</span>
<span class="t" style="left:1741.80px;top:694.32px;font-size:11.5px;line-height:16px;color:#d0d0d0;letter-spacing:-1.100px;">Tfm</span>
<span class="t" style="left:1769.40px;top:694.32px;font-size:11.5px;line-height:16px;color:#d0d0d0;letter-spacing:-0.703px;">His</span>
<span class="t" style="left:1794.00px;top:694.32px;font-size:11.5px;line-height:16px;color:#d0d0d0;letter-spacing:-0.817px;">Cnx</span>
<span class="t" style="left:1821.80px;top:694.32px;font-size:11.5px;line-height:16px;color:#d0d0d0;letter-spacing:-0.754px;">32P</span>
<svg class="a" style="left:1902.50px;top:697.50px;" width="11" height="9" viewBox="0 0 11 9"><path d="M0 .8H8M0 3.200H8M0 5.600H8" stroke="#e8e8e8" stroke-width="1.300"/><rect x="9" y="7" width="1.600" height="1.600" fill="#e8e8e8"/></svg>
<span class="t" style="left:1665.20px;top:720.22px;font-size:11.5px;line-height:16px;color:#ececec;letter-spacing:-0.258px;">Zoom:</span>
<svg class="a" style="left:1700.20px;top:722.40px;" width="16" height="16" viewBox="0 0 16 16"><circle cx="8" cy="8" r="7" fill="none" stroke="#c8c8c8" stroke-width="1.100"/><path d="M4.500 8H11.500" stroke="#c8c8c8" stroke-width="1.200"/></svg>
<div class="a" style="left:1722.40px;top:725.50px;width:116.00px;height:2.50px;background:#363636;"></div>
<div class="a" style="left:1722.40px;top:725.30px;width:30.00px;height:3.20px;background:#5e8fd4;"></div>
<svg class="a" style="left:1749.10px;top:721.80px;" width="7.4" height="10" viewBox="0 0 7.4 10"><path d="M0 0H7.400V6.500L3.700 10L0 6.500Z" fill="#dcdcdc"/></svg>
<svg class="a" style="left:1724.00px;top:732.80px;" width="116" height="3" viewBox="0 0 116 3"><rect x="0.0" y="0" width="1" height="3" fill="#6a6a6a"/><rect x="4.0" y="0" width="1" height="3" fill="#6a6a6a"/><rect x="9.0" y="0" width="1" height="3" fill="#6a6a6a"/><rect x="24.0" y="0" width="1" height="3" fill="#6a6a6a"/><rect x="40.0" y="0" width="1" height="3" fill="#6a6a6a"/><rect x="45.0" y="0" width="1" height="3" fill="#6a6a6a"/><rect x="56.0" y="0" width="1" height="3" fill="#6a6a6a"/><rect x="70.0" y="0" width="1" height="3" fill="#6a6a6a"/><rect x="86.0" y="0" width="1" height="3" fill="#6a6a6a"/><rect x="92.0" y="0" width="1" height="3" fill="#6a6a6a"/><rect x="100.0" y="0" width="1" height="3" fill="#6a6a6a"/><rect x="112.0" y="0" width="1" height="3" fill="#6a6a6a"/></svg>
<div class="a" style="left:1840.70px;top:718.70px;width:48.70px;height:18.50px;background:#2c2c2c;border-radius:2px;"></div>
<span class="t" style="left:1846.00px;top:720.02px;font-size:11.5px;line-height:16px;color:#ececec;letter-spacing:-0.478px;">65 %</span>
<svg class="a" style="left:1893.50px;top:720.00px;" width="16" height="16" viewBox="0 0 16 16"><circle cx="8" cy="8" r="7" fill="none" stroke="#c8c8c8" stroke-width="1.100"/><path d="M4.500 8H11.500M8 4.500V11.500" stroke="#c8c8c8" stroke-width="1.200"/></svg>
<div class="a" style="left:1655.00px;top:742.00px;width:265.00px;height:1.00px;background:#303030;"></div>
<div class="a" style="left:1660.80px;top:798.30px;width:253.20px;height:158.30px;background:#fff;"></div>
<svg class="a" style="left:1679.700px;top:813.400px" width="154.300" height="117.700" viewBox="0 0 154.300 117.700"><defs><clipPath id="nv"><rect width="154.300" height="117.700" rx="15.300"/></clipPath></defs><g clip-path="url(#nv)"><use href="#art" width="154.300" height="117.700"/></g></svg>
<div class="a" style="left:0.00px;top:1011.50px;width:1920.00px;height:12.50px;background:#363636;"></div>
<span class="t" style="left:17.00px;top:1017.14px;font-size:12px;line-height:16px;color:#dcdcdc;letter-spacing:-0.218px;">"Rectangle arrondi" sélectionné(s).</span>
<span class="t" style="left:200.00px;top:1017.14px;font-size:12px;line-height:16px;color:#fff;letter-spacing:-0.548px;font-weight:700;">Cliquer</span>
<span class="t" style="left:241.00px;top:1017.14px;font-size:12px;line-height:16px;color:#dcdcdc;letter-spacing:-0.151px;">pour déplacer la sélection.</span>
<span class="t" style="left:382.50px;top:1017.14px;font-size:12px;line-height:16px;color:#fff;letter-spacing:-0.477px;font-weight:700;">Cliquer</span>
<span class="t" style="left:424.50px;top:1017.14px;font-size:12px;line-height:16px;color:#dcdcdc;">sur un autre objet pour le sélectionner.</span>
<span class="t" style="left:635.00px;top:1017.14px;font-size:12px;line-height:16px;color:#fff;letter-spacing:-0.405px;font-weight:700;">Cliquer</span>
<span class="t" style="left:677.00px;top:1017.14px;font-size:12px;line-height:16px;color:#dcdcdc;letter-spacing:-0.117px;">sur une zone vide pour annuler la sélection.</span>
</body></html>
